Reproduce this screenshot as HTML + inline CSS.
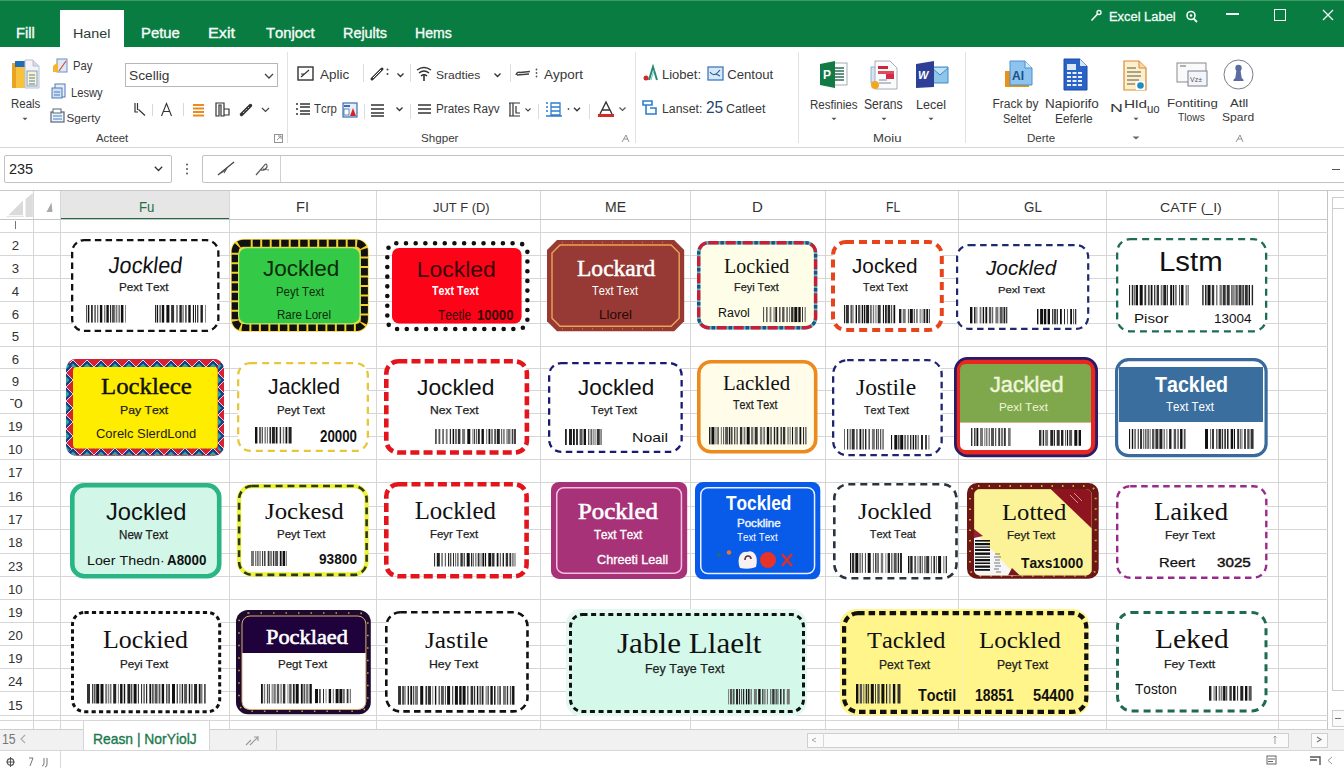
<!DOCTYPE html>
<html><head><meta charset="utf-8"><style>
html,body{margin:0;padding:0;}
body{width:1344px;height:768px;overflow:hidden;position:relative;background:#fff;font-family:"Liberation Sans",sans-serif;}
.a{position:absolute;box-sizing:border-box;}
svg.a{overflow:visible;}
.t{position:absolute;white-space:pre;transform-origin:0 0;font-kerning:none;font-feature-settings:"kern" 0,"liga" 0;}
</style></head><body>
<div class="a" style="left:0.00px;top:0.00px;width:1344.00px;height:47.00px;background:#097c42"></div>
<div class="a" style="left:0.00px;top:0.00px;width:1344.00px;height:1.00px;background:#3d9a62"></div>
<div class="a" style="left:60.00px;top:10.00px;width:63.50px;height:37.00px;background:#fff"></div>
<div class="t" style="left:15.79px;top:27.00px;font-family:'Liberation Sans', sans-serif;font-size:13.80px;line-height:13.80px;font-weight:400;font-style:normal;color:#f4fbf6;transform:scaleX(1.0660);-webkit-text-stroke:0.35px #f4fbf6;">Fill</div>
<div class="t" style="left:140.78px;top:26.00px;font-family:'Liberation Sans', sans-serif;font-size:14.54px;line-height:14.54px;font-weight:400;font-style:normal;color:#f4fbf6;transform:scaleX(1.0236);-webkit-text-stroke:0.35px #f4fbf6;">Petue</div>
<div class="t" style="left:208.47px;top:27.00px;font-family:'Liberation Sans', sans-serif;font-size:13.80px;line-height:13.80px;font-weight:400;font-style:normal;color:#f4fbf6;transform:scaleX(1.1758);-webkit-text-stroke:0.35px #f4fbf6;">Exit</div>
<div class="t" style="left:266.47px;top:27.00px;font-family:'Liberation Sans', sans-serif;font-size:13.80px;line-height:13.80px;font-weight:400;font-style:normal;color:#f4fbf6;transform:scaleX(1.0748);-webkit-text-stroke:0.35px #f4fbf6;">Tonjoct</div>
<div class="t" style="left:343.32px;top:27.00px;font-family:'Liberation Sans', sans-serif;font-size:13.80px;line-height:13.80px;font-weight:400;font-style:normal;color:#f4fbf6;transform:scaleX(1.0431);-webkit-text-stroke:0.35px #f4fbf6;">Rejults</div>
<div class="t" style="left:414.75px;top:26.00px;font-family:'Liberation Sans', sans-serif;font-size:14.54px;line-height:14.54px;font-weight:400;font-style:normal;color:#f4fbf6;transform:scaleX(0.9686);-webkit-text-stroke:0.35px #f4fbf6;">Hems</div>
<div class="t" style="left:73.43px;top:27.00px;font-family:'Liberation Sans', sans-serif;font-size:13.52px;line-height:13.52px;font-weight:400;font-style:normal;color:#2b3b33;transform:scaleX(1.0563);">Hanel</div>
<div class="t" style="left:1109.44px;top:10.00px;font-family:'Liberation Sans', sans-serif;font-size:13.52px;line-height:13.52px;font-weight:400;font-style:normal;color:#f4fbf6;transform:scaleX(0.9543);-webkit-text-stroke:0.3px #f4fbf6;">Excel Label</div>
<svg class="a" style="left:1090.00px;top:9.00px;" width="12.00" height="13.00" viewBox="0 0 12.00 13.00"><path d="M1.5 11.5 L8 4.5" stroke="#f4fbf6" stroke-width="1.6" fill="none"/><circle cx="9" cy="3.5" r="2" stroke="#f4fbf6" stroke-width="1.4" fill="none"/></svg>
<svg class="a" style="left:1185.00px;top:10.00px;" width="14.00" height="13.00" viewBox="0 0 14.00 13.00"><circle cx="6" cy="5.5" r="4" stroke="#f4fbf6" stroke-width="1.6" fill="none"/><path d="M8.5 8.5 L12 12" stroke="#f4fbf6" stroke-width="1.8"/><circle cx="6" cy="5.5" r="1.3" fill="#f4fbf6"/></svg>
<div class="a" style="left:1226.40px;top:13.30px;width:12.60px;height:1.50px;background:#f4fbf6"></div>
<div class="a" style="left:1274.00px;top:8.80px;width:12.30px;height:11.80px;border:1.5px solid #f4fbf6"></div>
<svg class="a" style="left:1322.00px;top:9.00px;" width="12.00" height="12.00" viewBox="0 0 12.00 12.00"><path d="M1 1 L11 11 M11 1 L1 11" stroke="#f4fbf6" stroke-width="1.4"/></svg>
<div class="a" style="left:0.00px;top:147.00px;width:1344.00px;height:1.00px;background:#d6d6d6"></div>
<div class="a" style="left:287.40px;top:52.00px;width:1.00px;height:91.00px;background:#e2e2e2"></div>
<div class="a" style="left:634.50px;top:52.00px;width:1.00px;height:91.00px;background:#e2e2e2"></div>
<div class="a" style="left:798.10px;top:52.00px;width:1.00px;height:91.00px;background:#e2e2e2"></div>
<div class="a" style="left:964.50px;top:52.00px;width:1.00px;height:91.00px;background:#e2e2e2"></div>
<svg class="a" style="left:11.00px;top:58.00px;" width="31.00" height="32.00" viewBox="0 0 31.00 32.00"><rect x="1" y="5" width="16" height="25" fill="#f7c33c" rx="1"/><rect x="1" y="5" width="4" height="25" fill="#e8a321"/>
<path d="M4 3 h11 v6 h-11z" fill="#1f6fb8"/><path d="M14 2 L22 2 L28 8 L28 30 L14 30 Z" fill="#f3f3f8" stroke="#b9bfd0" stroke-width="1"/>
<path d="M22 2 L22 8 L28 8" fill="#d8dbe6" stroke="#b9bfd0" stroke-width="1"/><rect x="16" y="13" width="10" height="15" fill="#fff3c4" stroke="#7aa0d0" stroke-width="1"/>
<path d="M18 17h6M18 20h6M18 23h6M18 26h6" stroke="#4d7fc3" stroke-width="1.2"/></svg>
<div class="t" style="left:10.66px;top:98.00px;font-family:'Liberation Sans', sans-serif;font-size:12.28px;line-height:12.28px;font-weight:400;font-style:normal;color:#383838;transform:scaleX(0.9349);">Reals</div>
<svg class="a" style="left:22.00px;top:117.00px;" width="6.00" height="4.00" viewBox="0 0 6.00 4.00"><path d="M0.5 0.8 L3 3.3 L5.5 0.8z" fill="#555"/></svg>
<svg class="a" style="left:52.00px;top:58.00px;" width="16.00" height="16.00" viewBox="0 0 16.00 16.00"><rect x="5" y="1" width="10" height="13" fill="#dfe9f6" stroke="#6b8fc5"/><path d="M1 8 l5 -4 v10 h-5z" fill="#f3b52a"/><path d="M7 13 L14 3" stroke="#d14a3a" stroke-width="1.2"/></svg>
<div class="t" style="left:72.87px;top:61.00px;font-family:'Liberation Sans', sans-serif;font-size:11.92px;line-height:11.92px;font-weight:400;font-style:normal;color:#383838;transform:scaleX(0.9469);">Pay</div>
<svg class="a" style="left:51.00px;top:83.00px;" width="16.00" height="17.00" viewBox="0 0 16.00 17.00"><rect x="4" y="1" width="10" height="13" fill="#e6eefa" stroke="#5179b6"/><rect x="1" y="5" width="10" height="10" fill="#cfe0f5" stroke="#5179b6"/><path d="M3 9h6M3 12h6" stroke="#5179b6"/></svg>
<div class="t" style="left:70.88px;top:86.00px;font-family:'Liberation Sans', sans-serif;font-size:13.08px;line-height:13.08px;font-weight:400;font-style:normal;color:#383838;transform:scaleX(0.8532);">Leswy</div>
<svg class="a" style="left:50.00px;top:108.00px;" width="15.00" height="15.00" viewBox="0 0 15.00 15.00"><rect x="1" y="4" width="13" height="10" fill="#eef3f9" stroke="#55657a" stroke-width="1.2"/><rect x="3" y="1" width="8" height="4" fill="#fff" stroke="#55657a"/><path d="M3 8h9M3 11h9" stroke="#3f7ec9" stroke-width="1.2"/></svg>
<div class="t" style="left:66.46px;top:112.00px;font-family:'Liberation Sans', sans-serif;font-size:11.74px;line-height:11.74px;font-weight:400;font-style:normal;color:#383838;">Sgerty</div>
<div class="t" style="left:96.38px;top:132.00px;font-family:'Liberation Sans', sans-serif;font-size:11.77px;line-height:11.77px;font-weight:400;font-style:normal;color:#3a3a3a;transform:scaleX(0.9649);">Acteet</div>
<svg class="a" style="left:274.00px;top:134.00px;" width="9.00" height="9.00" viewBox="0 0 9.00 9.00"><rect x="0.5" y="0.5" width="8" height="8" fill="none" stroke="#888" stroke-width="0.9"/><path d="M3 6 L7 2 M4 2h3v3" stroke="#888" stroke-width="0.9" fill="none"/></svg>
<div class="a" style="left:125.40px;top:63.40px;width:152.40px;height:24.10px;border:1px solid #b7b7b7;background:#fff"></div>
<div class="t" style="left:129.38px;top:69.00px;font-family:'Liberation Sans', sans-serif;font-size:13.11px;line-height:13.11px;font-weight:400;font-style:normal;color:#383838;transform:scaleX(1.0462);">Scellig</div>
<svg class="a" style="left:264.00px;top:73.00px;" width="10.00" height="7.00" viewBox="0 0 10.00 7.00"><path d="M1 1 L5 5 L9 1" stroke="#444" stroke-width="1.3" fill="none"/></svg>
<svg class="a" style="left:133.00px;top:102.00px;" width="14.00" height="15.00" viewBox="0 0 14.00 15.00"><path d="M2 1 v9 h3 M4.5 1 v7 M5.5 7.5 L12 13.5" stroke="#333" stroke-width="1.2" fill="none"/></svg>
<div class="a" style="left:152.00px;top:104.00px;width:1.00px;height:12.00px;background:#d8d8d8"></div>
<svg class="a" style="left:160.00px;top:102.00px;" width="14.00" height="15.00" viewBox="0 0 14.00 15.00"><path d="M1.5 14 L6.5 1.5 L11.5 14 M3.5 9.5 h6" stroke="#333" stroke-width="1.1" fill="none"/></svg>
<div class="a" style="left:183.00px;top:103.00px;width:1.00px;height:13.00px;background:#d8d8d8"></div>
<svg class="a" style="left:193.00px;top:103.00px;" width="11.00" height="14.00" viewBox="0 0 11.00 14.00"><path d="M0 2h11M0 5.5h11M0 9h11M0 12.5h11" stroke="#e98a1f" stroke-width="2"/></svg>
<svg class="a" style="left:215.00px;top:102.00px;" width="15.00" height="15.00" viewBox="0 0 15.00 15.00"><path d="M1 1 h8 v13 h-3 v-11 h-2 v11 h-3z M9 7 h5 v6 h-5" stroke="#333" stroke-width="1.2" fill="none"/></svg>
<svg class="a" style="left:239.00px;top:102.00px;" width="14.00" height="15.00" viewBox="0 0 14.00 15.00"><path d="M2.5 12.5 L11.5 3.5" stroke="#333" stroke-width="3.4" stroke-linecap="round"/><path d="M4 11 L10 5" stroke="#fff" stroke-width="0.7" stroke-dasharray="2 1.5"/></svg>
<svg class="a" style="left:261.00px;top:107.00px;" width="9.00" height="6.00" viewBox="0 0 9.00 6.00"><path d="M1 1 L4.5 4.5 L8 1" stroke="#444" stroke-width="1.2" fill="none"/></svg>
<svg class="a" style="left:297.00px;top:66.00px;" width="17.00" height="15.00" viewBox="0 0 17.00 15.00"><rect x="1" y="1" width="15" height="13" fill="none" stroke="#333" stroke-width="1.4"/><path d="M4 11 L12 4 M4 8h4" stroke="#333" stroke-width="1.2"/></svg>
<div class="t" style="left:320.47px;top:69.00px;font-family:'Liberation Sans', sans-serif;font-size:12.70px;line-height:12.70px;font-weight:400;font-style:normal;color:#383838;transform:scaleX(1.0604);">Aplic</div>
<div class="a" style="left:363.30px;top:64.00px;width:1.00px;height:18.00px;background:#dcdcdc"></div>
<svg class="a" style="left:370.00px;top:66.00px;" width="15.00" height="15.00" viewBox="0 0 15.00 15.00"><path d="M2 13 L12 3" stroke="#333" stroke-width="3" stroke-linecap="round"/><path d="M3 12 L11 4" stroke="#fff" stroke-width="1"/></svg>
<svg class="a" style="left:386.00px;top:68.00px;" width="3.00" height="8.00" viewBox="0 0 3.00 8.00"><circle cx="1.5" cy="1.5" r="1" fill="#444"/><circle cx="1.5" cy="6" r="1" fill="#444"/></svg>
<svg class="a" style="left:397.00px;top:73.00px;" width="7.00" height="5.00" viewBox="0 0 7.00 5.00"><path d="M0.5 0.5 L3.5 3.5 L6.5 0.5" stroke="#333" stroke-width="1.3" fill="none"/></svg>
<div class="a" style="left:409.50px;top:64.00px;width:1.00px;height:18.00px;background:#dcdcdc"></div>
<svg class="a" style="left:416.00px;top:66.00px;" width="16.00" height="15.00" viewBox="0 0 16.00 15.00"><path d="M1 4 Q8 -1 15 4 M3 7 Q8 3 13 7 M5 10 Q8 7.5 11 10" stroke="#333" stroke-width="1.5" fill="none"/><path d="M8 9 v6" stroke="#333" stroke-width="1.6"/></svg>
<div class="t" style="left:435.75px;top:69.00px;font-family:'Liberation Sans', sans-serif;font-size:11.73px;line-height:11.73px;font-weight:400;font-style:normal;color:#383838;transform:scaleX(1.0315);">Sradties</div>
<svg class="a" style="left:494.00px;top:73.00px;" width="7.00" height="5.00" viewBox="0 0 7.00 5.00"><path d="M0.5 0.5 L3.5 3.5 L6.5 0.5" stroke="#333" stroke-width="1.3" fill="none"/></svg>
<div class="a" style="left:510.00px;top:64.00px;width:1.00px;height:18.00px;background:#dcdcdc"></div>
<svg class="a" style="left:515.00px;top:70.00px;" width="16.00" height="7.00" viewBox="0 0 16.00 7.00"><path d="M1 5 Q2 1.5 5 2.5 L15 1.5 M2 5 L14 4" stroke="#444" stroke-width="1.4" fill="none"/></svg>
<svg class="a" style="left:535.00px;top:68.00px;" width="3.00" height="10.00" viewBox="0 0 3.00 10.00"><circle cx="1.5" cy="1.5" r="0.9" fill="#555"/><circle cx="1.5" cy="5" r="0.9" fill="#555"/><circle cx="1.5" cy="8.5" r="0.9" fill="#555"/></svg>
<div class="t" style="left:543.97px;top:69.00px;font-family:'Liberation Sans', sans-serif;font-size:12.35px;line-height:12.35px;font-weight:400;font-style:normal;color:#383838;transform:scaleX(1.0957);">Ayport</div>
<svg class="a" style="left:295.00px;top:102.00px;" width="16.00" height="15.00" viewBox="0 0 16.00 15.00"><path d="M1 2h2M1 7h2M1 12h2M5 2h10M5 5h10M5 9h10M5 12h10" stroke="#333" stroke-width="1.4"/></svg>
<div class="t" style="left:314.24px;top:102.00px;font-family:'Liberation Sans', sans-serif;font-size:13.66px;line-height:13.66px;font-weight:400;font-style:normal;color:#383838;transform:scaleX(0.8357);">Tcrp</div>
<svg class="a" style="left:342.00px;top:102.00px;" width="16.00" height="16.00" viewBox="0 0 16.00 16.00"><rect x="1" y="1" width="14" height="14" fill="#e8eef7" stroke="#3a6fb0" stroke-width="1.2"/><rect x="2" y="3" width="6" height="2" fill="#3a6fb0"/><path d="M8 14 L11 6 L14 14z" fill="#d6202a"/><rect x="2" y="7" width="5" height="6" fill="#fff" stroke="#3a6fb0" stroke-width="0.8"/></svg>
<div class="a" style="left:364.00px;top:104.00px;width:1.00px;height:15.00px;background:#dcdcdc"></div>
<svg class="a" style="left:371.00px;top:103.00px;" width="14.00" height="14.00" viewBox="0 0 14.00 14.00"><path d="M0 2h13M0 6h13M0 10h13M0 13h13" stroke="#333" stroke-width="1.5"/></svg>
<svg class="a" style="left:396.00px;top:107.00px;" width="7.00" height="5.00" viewBox="0 0 7.00 5.00"><path d="M0.5 0.5 L3.5 3.5 L6.5 0.5" stroke="#333" stroke-width="1.3" fill="none"/></svg>
<div class="a" style="left:409.50px;top:104.00px;width:1.00px;height:15.00px;background:#dcdcdc"></div>
<svg class="a" style="left:418.00px;top:103.00px;" width="14.00" height="14.00" viewBox="0 0 14.00 14.00"><path d="M0 2h13M0 6h13M0 10h13" stroke="#333" stroke-width="1.6"/></svg>
<div class="t" style="left:435.84px;top:102.00px;font-family:'Liberation Sans', sans-serif;font-size:13.66px;line-height:13.66px;font-weight:400;font-style:normal;color:#383838;transform:scaleX(0.8560);">Prates Rayv</div>
<svg class="a" style="left:508.00px;top:102.00px;" width="13.00" height="15.00" viewBox="0 0 13.00 15.00"><path d="M1 1h11M1 14h11M2 1v13M5 1v13M8 4v7h4" stroke="#333" stroke-width="1.2" fill="none"/></svg>
<svg class="a" style="left:525.00px;top:108.00px;" width="6.00" height="4.00" viewBox="0 0 6.00 4.00"><path d="M0.5 0.5 L3 3 L5.5 0.5" stroke="#444" stroke-width="1.1" fill="none"/></svg>
<div class="a" style="left:537.70px;top:104.00px;width:1.00px;height:15.00px;background:#dcdcdc"></div>
<svg class="a" style="left:545.00px;top:101.00px;" width="17.00" height="16.00" viewBox="0 0 17.00 16.00"><path d="M1 2h2M1 6h2M1 10h2M6 2h9v12h-9z M6 6h9M6 10h9M1 15h16" stroke="#2f7dd0" stroke-width="1.3" fill="none"/></svg>
<svg class="a" style="left:567.00px;top:107.00px;" width="15.00" height="5.00" viewBox="0 0 15.00 5.00"><circle cx="1.5" cy="2" r="0.9" fill="#555"/><path d="M7 0.8 L10 3.8 L13 0.8" stroke="#333" stroke-width="1.3" fill="none"/></svg>
<div class="a" style="left:588.60px;top:104.00px;width:1.00px;height:15.00px;background:#dcdcdc"></div>
<svg class="a" style="left:597.00px;top:101.00px;" width="18.00" height="17.00" viewBox="0 0 18.00 17.00"><path d="M3 13 L9 1 L15 13 M5.5 9h7" stroke="#333" stroke-width="1.4" fill="none"/><rect x="1" y="13" width="16" height="3" fill="#d42a2a"/></svg>
<svg class="a" style="left:619.00px;top:107.00px;" width="7.00" height="5.00" viewBox="0 0 7.00 5.00"><path d="M0.5 0.5 L3.5 3.5 L6.5 0.5" stroke="#555" stroke-width="1.2" fill="none"/></svg>
<div class="t" style="left:421.07px;top:133.00px;font-family:'Liberation Sans', sans-serif;font-size:10.76px;line-height:10.76px;font-weight:400;font-style:normal;color:#3a3a3a;transform:scaleX(1.0810);">Shgper</div>
<svg class="a" style="left:621.00px;top:134.00px;" width="9.00" height="9.00" viewBox="0 0 9.00 9.00"><path d="M1 8 L5 1 L8 8 M3 5h4" stroke="#888" stroke-width="0.9" fill="none"/></svg>
<svg class="a" style="left:643.00px;top:66.00px;" width="16.00" height="16.00" viewBox="0 0 16.00 16.00"><path d="M6 14 L10 1 L14 14" stroke="#2a8a70" stroke-width="2" fill="none"/><path d="M8 14 L11 4" stroke="#6cc" stroke-width="1"/><circle cx="3" cy="12" r="2.5" fill="#d42a2a"/></svg>
<div class="t" style="left:662.43px;top:69.00px;font-family:'Liberation Sans', sans-serif;font-size:12.70px;line-height:12.70px;font-weight:400;font-style:normal;color:#383838;transform:scaleX(1.0245);">Liobet:</div>
<svg class="a" style="left:707.00px;top:66.00px;" width="17.00" height="15.00" viewBox="0 0 17.00 15.00"><rect x="1" y="1" width="15" height="13" fill="#d7e8f7" stroke="#3e7cc0" stroke-width="1.3"/><path d="M3 6 Q7 12 13 4 M9 8 L13 10" stroke="#2a5f9e" stroke-width="1.2" fill="none"/></svg>
<div class="t" style="left:727.13px;top:68.00px;font-family:'Liberation Sans', sans-serif;font-size:13.18px;line-height:13.18px;font-weight:400;font-style:normal;color:#383838;">Centout</div>
<svg class="a" style="left:642.00px;top:100.00px;" width="16.00" height="16.00" viewBox="0 0 16.00 16.00"><path d="M1 1h9v4h-9z M4 5v9h10v-6h-6" stroke="#2f7dd0" stroke-width="1.6" fill="none"/></svg>
<div class="t" style="left:661.79px;top:102.00px;font-family:'Liberation Sans', sans-serif;font-size:13.08px;line-height:13.08px;font-weight:400;font-style:normal;color:#383838;transform:scaleX(0.9399);">Lanset:</div>
<div class="t" style="left:705.82px;top:100.00px;font-family:'Liberation Sans', sans-serif;font-size:15.75px;line-height:15.75px;font-weight:400;font-style:normal;color:#24466e;transform:scaleX(0.9832);">25</div>
<div class="t" style="left:726.07px;top:103.00px;font-family:'Liberation Sans', sans-serif;font-size:12.42px;line-height:12.42px;font-weight:400;font-style:normal;color:#383838;">Catleet</div>
<svg class="a" style="left:819.00px;top:60.00px;" width="29.00" height="29.00" viewBox="0 0 29.00 29.00"><rect x="12" y="3" width="16" height="22" fill="#fff" stroke="#8a9aa0" stroke-width="0.8"/>
<path d="M15 8h10M15 11h10M15 14h10M15 17h10M15 20h10" stroke="#2f6f5a" stroke-width="1.4"/>
<path d="M1 4 L16 1 L16 28 L1 25z" fill="#127a45"/><text x="4" y="19" font-family="Liberation Sans" font-weight="700" font-size="12" fill="#fff">P</text></svg>
<div class="t" style="left:809.75px;top:98.00px;font-family:'Liberation Sans', sans-serif;font-size:13.25px;line-height:13.25px;font-weight:400;font-style:normal;color:#383838;transform:scaleX(0.8730);">Resfinies</div>
<svg class="a" style="left:831.00px;top:117.00px;" width="6.00" height="4.00" viewBox="0 0 6.00 4.00"><path d="M0.5 0.8 L3 3.3 L5.5 0.8z" fill="#555"/></svg>
<svg class="a" style="left:869.00px;top:60.00px;" width="30.00" height="30.00" viewBox="0 0 30.00 30.00"><rect x="2" y="7" width="9" height="16" fill="#d5e6f3" stroke="#7aa0c8" stroke-width="0.8"/>
<path d="M6 1 h15 l7 7 v21 h-22z" fill="#fbfbfb" stroke="#9aa3b3" stroke-width="0.9"/>
<rect x="9" y="6" width="10" height="3" fill="#c8283a"/><rect x="9" y="11" width="16" height="3" fill="#e24a5e"/><rect x="17" y="14" width="8" height="5" fill="#d42a48"/>
<path d="M10 20h8M10 23h12" stroke="#7d8aa0" stroke-width="1"/><circle cx="6" cy="25" r="4" fill="#f2a81e"/></svg>
<div class="t" style="left:864.45px;top:98.00px;font-family:'Liberation Sans', sans-serif;font-size:13.75px;line-height:13.75px;font-weight:400;font-style:normal;color:#383838;transform:scaleX(0.8836);">Serans</div>
<svg class="a" style="left:881.00px;top:117.00px;" width="6.00" height="4.00" viewBox="0 0 6.00 4.00"><path d="M0.5 0.8 L3 3.3 L5.5 0.8z" fill="#555"/></svg>
<svg class="a" style="left:915.00px;top:60.00px;" width="34.00" height="29.00" viewBox="0 0 34.00 29.00"><path d="M17 7 h16 v16 h-16z" fill="#8ec6ea" stroke="#3d8ac8" stroke-width="1"/><path d="M17 8 L25 15 L33 8" stroke="#3d8ac8" stroke-width="1" fill="#bfe0f5"/>
<path d="M1 4 L19 1 L19 27 L1 28z" fill="#2e3f96"/><text x="3" y="19" font-family="Liberation Sans" font-style="italic" font-weight="700" font-size="11" fill="#fff">W</text></svg>
<div class="t" style="left:916.17px;top:98.00px;font-family:'Liberation Sans', sans-serif;font-size:13.25px;line-height:13.25px;font-weight:400;font-style:normal;color:#383838;transform:scaleX(0.9462);">Lecel</div>
<svg class="a" style="left:928.00px;top:117.00px;" width="6.00" height="4.00" viewBox="0 0 6.00 4.00"><path d="M0.5 0.8 L3 3.3 L5.5 0.8z" fill="#555"/></svg>
<div class="t" style="left:872.62px;top:133.00px;font-family:'Liberation Sans', sans-serif;font-size:11.04px;line-height:11.04px;font-weight:400;font-style:normal;color:#3a3a3a;transform:scaleX(1.1888);">Moiu</div>
<svg class="a" style="left:1004.00px;top:60.00px;" width="30.00" height="28.00" viewBox="0 0 30.00 28.00"><path d="M1 11 h5 v12 h19 v4 h-24z" fill="#e8921e"/>
<path d="M6 1 h15 l7 7 v17 h-22z" fill="#8cc4ee" stroke="#4d8fcf" stroke-width="1"/><path d="M21 1 v7 h7" fill="#d6ebfa" stroke="#4d8fcf" stroke-width="1"/>
<text x="8" y="20" font-family="Liberation Sans" font-weight="700" font-size="12" fill="#1b4f8a">AI</text></svg>
<div class="t" style="left:992.42px;top:98.00px;font-family:'Liberation Sans', sans-serif;font-size:12.01px;line-height:12.01px;font-weight:400;font-style:normal;color:#383838;">Frack by</div>
<div class="t" style="left:1003.00px;top:113.00px;font-family:'Liberation Sans', sans-serif;font-size:12.01px;line-height:12.01px;font-weight:400;font-style:normal;color:#383838;transform:scaleX(0.9146);">Seltet</div>
<svg class="a" style="left:1063.00px;top:58.00px;" width="25.00" height="33.00" viewBox="0 0 25.00 33.00"><path d="M1 1 h16 l7 7 v24 h-23z" fill="#2a63c8" stroke="#1a4aa0" stroke-width="1"/><path d="M17 1 v7 h7z" fill="#d5e4f7"/>
<rect x="4" y="6" width="9" height="6" fill="#dbe8f8"/><path d="M4 15h16M4 19h16M4 23h16M4 27h16" stroke="#e8f0fb" stroke-width="1.8" stroke-dasharray="4 1.5"/></svg>
<div class="t" style="left:1044.60px;top:98.00px;font-family:'Liberation Sans', sans-serif;font-size:12.01px;line-height:12.01px;font-weight:400;font-style:normal;color:#383838;transform:scaleX(1.1211);">Napiorifo</div>
<div class="t" style="left:1054.72px;top:113.00px;font-family:'Liberation Sans', sans-serif;font-size:12.01px;line-height:12.01px;font-weight:400;font-style:normal;color:#383838;transform:scaleX(0.9911);">Eeferle</div>
<svg class="a" style="left:1123.00px;top:60.00px;" width="24.00" height="31.00" viewBox="0 0 24.00 31.00"><path d="M1 1 h15 l7 7 v22 h-22z" fill="#fcefc9" stroke="#d88a3a" stroke-width="1.2"/><path d="M16 1 v7 h7" fill="#f6d9a8" stroke="#d88a3a" stroke-width="1"/>
<path d="M4 8h9M4 12h14M4 16h14M4 20h12M4 24h8" stroke="#8c8c78" stroke-width="1.3"/><rect x="13" y="21" width="9" height="9" fill="#fff"/><circle cx="17.5" cy="25.5" r="3.3" fill="#1d8fc0"/></svg>
<div class="t" style="left:1109.93px;top:102.00px;font-family:'Liberation Sans', sans-serif;font-size:11.77px;line-height:11.77px;font-weight:400;font-style:normal;color:#383838;transform:scaleX(1.5205);">N</div>
<div class="t" style="left:1124.14px;top:99.00px;font-family:'Liberation Sans', sans-serif;font-size:11.04px;line-height:11.04px;font-weight:400;font-style:normal;color:#383838;transform:scaleX(1.3914);">Hld</div>
<div class="t" style="left:1146.76px;top:104.00px;font-family:'Liberation Sans', sans-serif;font-size:11.89px;line-height:11.89px;font-weight:400;font-style:normal;color:#383838;transform:scaleX(0.9617);">uo</div>
<svg class="a" style="left:1133.00px;top:117.00px;" width="6.00" height="4.00" viewBox="0 0 6.00 4.00"><path d="M0.5 0.8 L3 3.3 L5.5 0.8z" fill="#555"/></svg>
<div class="t" style="left:1026.65px;top:132.00px;font-family:'Liberation Sans', sans-serif;font-size:11.63px;line-height:11.63px;font-weight:400;font-style:normal;color:#3a3a3a;transform:scaleX(0.9939);">Derte</div>
<svg class="a" style="left:1132.00px;top:136.00px;" width="8.00" height="4.00" viewBox="0 0 8.00 4.00"><path d="M0.5 0.5 L4 3.5 L7.5 0.5z" fill="#666"/></svg>
<svg class="a" style="left:1176.00px;top:62.00px;" width="32.00" height="25.00" viewBox="0 0 32.00 25.00"><rect x="1" y="1" width="29" height="19" fill="#fafafa" stroke="#8a8a8a" stroke-width="1"/><path d="M4 4h6" stroke="#666"/>
<rect x="12" y="9" width="19" height="15" fill="#f3f5fa" stroke="#7a7f8a" stroke-width="1"/><text x="14" y="20" font-family="Liberation Sans" font-size="7" fill="#556">Vz±</text></svg>
<div class="t" style="left:1167.21px;top:98.00px;font-family:'Liberation Sans', sans-serif;font-size:11.04px;line-height:11.04px;font-weight:400;font-style:normal;color:#383838;transform:scaleX(1.2007);">Fontiting</div>
<div class="t" style="left:1178.07px;top:112.00px;font-family:'Liberation Sans', sans-serif;font-size:11.04px;line-height:11.04px;font-weight:400;font-style:normal;color:#383838;transform:scaleX(0.9296);">Tlows</div>
<svg class="a" style="left:1223.00px;top:59.00px;" width="31.00" height="31.00" viewBox="0 0 31.00 31.00"><circle cx="15.5" cy="15.5" r="14.5" fill="#fff" stroke="#7a7a8a" stroke-width="1"/><circle cx="15.5" cy="9" r="3.2" fill="#5b6aa0"/><path d="M13.5 11 h4 l1.2 8 q2 1 2 3 h-10.4 q0 -2 2 -3z" fill="#5b6aa0"/></svg>
<div class="t" style="left:1229.87px;top:98.00px;font-family:'Liberation Sans', sans-serif;font-size:11.04px;line-height:11.04px;font-weight:400;font-style:normal;color:#383838;transform:scaleX(1.1937);">Atll</div>
<div class="t" style="left:1221.95px;top:112.00px;font-family:'Liberation Sans', sans-serif;font-size:11.04px;line-height:11.04px;font-weight:400;font-style:normal;color:#383838;transform:scaleX(1.0903);">Spard</div>
<svg class="a" style="left:1235.00px;top:134.00px;" width="9.00" height="9.00" viewBox="0 0 9.00 9.00"><path d="M1 8 L5 1 L8 8 M3 5h4" stroke="#888" stroke-width="0.9" fill="none"/></svg>
<div class="a" style="left:4.00px;top:154.60px;width:167.50px;height:28.60px;border:1px solid #c2c2c2;border-radius:2px;background:#fff"></div>
<div class="t" style="left:9.07px;top:162.00px;font-family:'Liberation Sans', sans-serif;font-size:14.04px;line-height:14.04px;font-weight:400;font-style:normal;color:#222;transform:scaleX(1.0307);">235</div>
<svg class="a" style="left:154.00px;top:166.00px;" width="9.00" height="6.00" viewBox="0 0 9.00 6.00"><path d="M0.8 0.8 L4.5 4.5 L8.2 0.8" stroke="#333" stroke-width="1.3" fill="none"/></svg>
<svg class="a" style="left:185.00px;top:163.00px;" width="4.00" height="13.00" viewBox="0 0 4.00 13.00"><circle cx="2" cy="1.5" r="1" fill="#555"/><circle cx="2" cy="6" r="1" fill="#555"/><circle cx="2" cy="10.5" r="1" fill="#555"/></svg>
<div class="a" style="left:201.60px;top:154.60px;width:1200.00px;height:28.60px;border:1px solid #c2c2c2;border-radius:2px;background:#fff"></div>
<div class="a" style="left:280.30px;top:156.00px;width:1.00px;height:26.00px;background:#d0d0d0"></div>
<svg class="a" style="left:217.00px;top:161.00px;" width="18.00" height="15.00" viewBox="0 0 18.00 15.00"><path d="M1 14 L17 1" stroke="#444" stroke-width="1.3"/><path d="M4 12 L9 8 M7 12 L10 7" stroke="#555" stroke-width="1.2"/></svg>
<svg class="a" style="left:255.00px;top:161.00px;" width="15.00" height="15.00" viewBox="0 0 15.00 15.00"><path d="M1 14 L8 6 Q12 0 12 6 Q10 10 6 9 M8 8 L14 9" stroke="#555" stroke-width="1.2" fill="none"/></svg>
<div class="a" style="left:1332.00px;top:168.50px;width:8.00px;height:1.50px;background:#555"></div>
<div class="a" style="left:0.00px;top:190.20px;width:1344.00px;height:1.00px;background:#c8c8c8"></div>
<div class="a" style="left:60.90px;top:190.50px;width:168.10px;height:29.00px;background:#e6e6e6"></div>
<div class="a" style="left:60.90px;top:218.30px;width:168.10px;height:2.20px;background:#1f6b45"></div>
<div class="a" style="left:32.50px;top:190.50px;width:1.00px;height:538.00px;background:#d6d6d6"></div>
<div class="a" style="left:60.00px;top:190.50px;width:1.00px;height:538.00px;background:#d6d6d6"></div>
<div class="a" style="left:228.50px;top:190.50px;width:1.00px;height:538.00px;background:#d6d6d6"></div>
<div class="a" style="left:376.00px;top:190.50px;width:1.00px;height:538.00px;background:#d6d6d6"></div>
<div class="a" style="left:539.50px;top:190.50px;width:1.00px;height:538.00px;background:#d6d6d6"></div>
<div class="a" style="left:689.50px;top:190.50px;width:1.00px;height:538.00px;background:#d6d6d6"></div>
<div class="a" style="left:824.50px;top:190.50px;width:1.00px;height:538.00px;background:#d6d6d6"></div>
<div class="a" style="left:958.00px;top:190.50px;width:1.00px;height:538.00px;background:#d6d6d6"></div>
<div class="a" style="left:1105.50px;top:190.50px;width:1.00px;height:538.00px;background:#d6d6d6"></div>
<div class="a" style="left:1277.50px;top:190.50px;width:1.00px;height:538.00px;background:#d6d6d6"></div>
<div class="a" style="left:1327.20px;top:190.50px;width:1.20px;height:538.00px;background:#c4c4c4"></div>
<div class="a" style="left:0.00px;top:219.30px;width:1328.00px;height:1.20px;background:#c6c6c6"></div>
<div class="a" style="left:0.00px;top:232.10px;width:1328.00px;height:1.00px;background:#d6d6d6"></div>
<div class="a" style="left:0.00px;top:254.90px;width:1328.00px;height:1.00px;background:#d6d6d6"></div>
<div class="a" style="left:0.00px;top:278.00px;width:1328.00px;height:1.00px;background:#d6d6d6"></div>
<div class="a" style="left:0.00px;top:301.00px;width:1328.00px;height:1.00px;background:#d6d6d6"></div>
<div class="a" style="left:0.00px;top:322.90px;width:1328.00px;height:1.00px;background:#d6d6d6"></div>
<div class="a" style="left:0.00px;top:345.80px;width:1328.00px;height:1.00px;background:#d6d6d6"></div>
<div class="a" style="left:0.00px;top:368.10px;width:1328.00px;height:1.00px;background:#d6d6d6"></div>
<div class="a" style="left:0.00px;top:389.80px;width:1328.00px;height:1.00px;background:#d6d6d6"></div>
<div class="a" style="left:0.00px;top:413.20px;width:1328.00px;height:1.00px;background:#d6d6d6"></div>
<div class="a" style="left:0.00px;top:436.10px;width:1328.00px;height:1.00px;background:#d6d6d6"></div>
<div class="a" style="left:0.00px;top:459.00px;width:1328.00px;height:1.00px;background:#d6d6d6"></div>
<div class="a" style="left:0.00px;top:482.40px;width:1328.00px;height:1.00px;background:#d6d6d6"></div>
<div class="a" style="left:0.00px;top:505.50px;width:1328.00px;height:1.00px;background:#d6d6d6"></div>
<div class="a" style="left:0.00px;top:528.90px;width:1328.00px;height:1.00px;background:#d6d6d6"></div>
<div class="a" style="left:0.00px;top:552.60px;width:1328.00px;height:1.00px;background:#d6d6d6"></div>
<div class="a" style="left:0.00px;top:575.80px;width:1328.00px;height:1.00px;background:#d6d6d6"></div>
<div class="a" style="left:0.00px;top:598.80px;width:1328.00px;height:1.00px;background:#d6d6d6"></div>
<div class="a" style="left:0.00px;top:622.00px;width:1328.00px;height:1.00px;background:#d6d6d6"></div>
<div class="a" style="left:0.00px;top:644.90px;width:1328.00px;height:1.00px;background:#d6d6d6"></div>
<div class="a" style="left:0.00px;top:667.70px;width:1328.00px;height:1.00px;background:#d6d6d6"></div>
<div class="a" style="left:0.00px;top:691.10px;width:1328.00px;height:1.00px;background:#d6d6d6"></div>
<div class="a" style="left:0.00px;top:715.20px;width:1328.00px;height:1.00px;background:#d6d6d6"></div>
<div class="a" style="left:0.00px;top:719.90px;width:1328.00px;height:1.00px;background:#d6d6d6"></div>
<svg class="a" style="left:0.00px;top:188.00px;" width="40.00" height="32.00" viewBox="0 0 40.00 32.00"><path d="M8.3 27.2 L23 12.5 L23 27.2z" fill="#dadada"/><path d="M25.5 11 L32.8 5 L32.8 29 L25.5 29z" fill="#dcdcdc"/><path d="M6.5 28.6 H24" stroke="#e2e2e2" stroke-width="1"/></svg>
<svg class="a" style="left:45.00px;top:201.00px;" width="9.00" height="12.00" viewBox="0 0 9.00 12.00"><path d="M1.5 11 L6.5 1.5 L7.5 11z" fill="#aaa"/></svg>
<div class="t" style="left:138.51px;top:200.00px;font-family:'Liberation Sans', sans-serif;font-size:14.24px;line-height:14.24px;font-weight:400;font-style:normal;color:#1e6e44;transform:scaleX(0.9305);">Fu</div>
<div class="t" style="left:295.51px;top:200.00px;font-family:'Liberation Sans', sans-serif;font-size:14.24px;line-height:14.24px;font-weight:400;font-style:normal;color:#333;transform:scaleX(1.0221);">FI</div>
<div class="t" style="left:433.40px;top:201.00px;font-family:'Liberation Sans', sans-serif;font-size:13.52px;line-height:13.52px;font-weight:400;font-style:normal;color:#333;transform:scaleX(0.9555);">JUT F (D)</div>
<div class="t" style="left:604.85px;top:200.00px;font-family:'Liberation Sans', sans-serif;font-size:14.24px;line-height:14.24px;font-weight:400;font-style:normal;color:#333;transform:scaleX(0.9854);">ME</div>
<div class="t" style="left:752.07px;top:200.00px;font-family:'Liberation Sans', sans-serif;font-size:14.24px;line-height:14.24px;font-weight:400;font-style:normal;color:#333;transform:scaleX(1.0549);">D</div>
<div class="t" style="left:886.20px;top:200.00px;font-family:'Liberation Sans', sans-serif;font-size:14.24px;line-height:14.24px;font-weight:400;font-style:normal;color:#333;transform:scaleX(0.8544);">FL</div>
<div class="t" style="left:1023.63px;top:200.00px;font-family:'Liberation Sans', sans-serif;font-size:14.04px;line-height:14.04px;font-weight:400;font-style:normal;color:#333;transform:scaleX(0.9515);">GL</div>
<div class="t" style="left:1160.49px;top:201.00px;font-family:'Liberation Sans', sans-serif;font-size:13.52px;line-height:13.52px;font-weight:400;font-style:normal;color:#333;transform:scaleX(1.0410);">CATF (_I)</div>
<div class="t" style="left:11.83px;top:239.00px;font-family:'Liberation Sans', sans-serif;font-size:13.20px;line-height:13.20px;font-weight:400;font-style:normal;color:#333;">2</div>
<div class="t" style="left:11.87px;top:262.00px;font-family:'Liberation Sans', sans-serif;font-size:13.20px;line-height:13.20px;font-weight:400;font-style:normal;color:#333;">3</div>
<div class="t" style="left:11.87px;top:285.00px;font-family:'Liberation Sans', sans-serif;font-size:13.20px;line-height:13.20px;font-weight:400;font-style:normal;color:#333;">4</div>
<div class="t" style="left:11.78px;top:308.00px;font-family:'Liberation Sans', sans-serif;font-size:13.20px;line-height:13.20px;font-weight:400;font-style:normal;color:#333;">6</div>
<div class="t" style="left:11.84px;top:330.00px;font-family:'Liberation Sans', sans-serif;font-size:13.20px;line-height:13.20px;font-weight:400;font-style:normal;color:#333;">5</div>
<div class="t" style="left:11.78px;top:353.00px;font-family:'Liberation Sans', sans-serif;font-size:13.20px;line-height:13.20px;font-weight:400;font-style:normal;color:#333;">6</div>
<div class="t" style="left:11.83px;top:375.00px;font-family:'Liberation Sans', sans-serif;font-size:13.20px;line-height:13.20px;font-weight:400;font-style:normal;color:#333;">9</div>
<div class="t" style="left:13.59px;top:397.00px;font-family:'Liberation Sans', sans-serif;font-size:13.20px;line-height:13.20px;font-weight:400;font-style:normal;color:#333;transform:scaleX(1.1886);">0</div>
<div class="a" style="left:10.30px;top:398.80px;width:3.60px;height:1.30px;background:#444;transform:rotate(8deg)"></div>
<div class="t" style="left:7.97px;top:420.00px;font-family:'Liberation Sans', sans-serif;font-size:13.20px;line-height:13.20px;font-weight:400;font-style:normal;color:#333;">19</div>
<div class="t" style="left:7.91px;top:443.00px;font-family:'Liberation Sans', sans-serif;font-size:13.20px;line-height:13.20px;font-weight:400;font-style:normal;color:#333;">10</div>
<div class="t" style="left:7.99px;top:466.00px;font-family:'Liberation Sans', sans-serif;font-size:13.20px;line-height:13.20px;font-weight:400;font-style:normal;color:#333;">17</div>
<div class="t" style="left:7.95px;top:490.00px;font-family:'Liberation Sans', sans-serif;font-size:13.20px;line-height:13.20px;font-weight:400;font-style:normal;color:#333;">16</div>
<div class="t" style="left:7.99px;top:513.00px;font-family:'Liberation Sans', sans-serif;font-size:13.20px;line-height:13.20px;font-weight:400;font-style:normal;color:#333;">17</div>
<div class="t" style="left:7.94px;top:536.00px;font-family:'Liberation Sans', sans-serif;font-size:13.20px;line-height:13.20px;font-weight:400;font-style:normal;color:#333;">18</div>
<div class="t" style="left:8.12px;top:560.00px;font-family:'Liberation Sans', sans-serif;font-size:13.20px;line-height:13.20px;font-weight:400;font-style:normal;color:#333;">23</div>
<div class="t" style="left:7.91px;top:583.00px;font-family:'Liberation Sans', sans-serif;font-size:13.20px;line-height:13.20px;font-weight:400;font-style:normal;color:#333;">10</div>
<div class="t" style="left:7.97px;top:606.00px;font-family:'Liberation Sans', sans-serif;font-size:13.20px;line-height:13.20px;font-weight:400;font-style:normal;color:#333;">19</div>
<div class="t" style="left:8.08px;top:629.00px;font-family:'Liberation Sans', sans-serif;font-size:13.20px;line-height:13.20px;font-weight:400;font-style:normal;color:#333;">20</div>
<div class="t" style="left:7.97px;top:652.00px;font-family:'Liberation Sans', sans-serif;font-size:13.20px;line-height:13.20px;font-weight:400;font-style:normal;color:#333;">19</div>
<div class="t" style="left:8.02px;top:675.00px;font-family:'Liberation Sans', sans-serif;font-size:13.20px;line-height:13.20px;font-weight:400;font-style:normal;color:#333;">24</div>
<div class="t" style="left:7.93px;top:699.00px;font-family:'Liberation Sans', sans-serif;font-size:13.20px;line-height:13.20px;font-weight:400;font-style:normal;color:#333;">15</div>
<div class="a" style="left:15.00px;top:221.00px;width:1.00px;height:8.00px;background:#777"></div>
<div class="a" style="left:0.00px;top:728.50px;width:1344.00px;height:21.70px;background:#f1f1f1"></div>
<div class="a" style="left:0.00px;top:728.50px;width:1344.00px;height:1.00px;background:#cfcfcf"></div>
<div class="a" style="left:82.60px;top:721.20px;width:127.20px;height:29.00px;background:#fff;border-left:1px solid #d6d6d6;border-right:1px solid #d6d6d6"></div>
<div class="t" style="left:2.37px;top:733.00px;font-family:'Liberation Sans', sans-serif;font-size:13.81px;line-height:13.81px;font-weight:400;font-style:normal;color:#777;transform:scaleX(0.8887);">15</div>
<svg class="a" style="left:20.00px;top:734.00px;" width="6.00" height="10.00" viewBox="0 0 6.00 10.00"><path d="M5 1 L1 5 L5 9" stroke="#aaa" stroke-width="1.1" fill="none"/></svg>
<div class="t" style="left:92.61px;top:732.00px;font-family:'Liberation Sans', sans-serif;font-size:14.77px;line-height:14.77px;font-weight:400;font-style:normal;color:#1a7a4c;transform:scaleX(0.9384);-webkit-text-stroke:0.35px #1a7a4c;">Reasn | NorYiolJ</div>
<div class="a" style="left:209.80px;top:729.00px;width:67.00px;height:21.00px;border-right:1px solid #d3d3d3"></div>
<svg class="a" style="left:244.00px;top:733.00px;" width="17.00" height="14.00" viewBox="0 0 17.00 14.00"><path d="M2 12 L7 7 M6 12 L14 4 L14 8 M10 4 L14 4" stroke="#999" stroke-width="1.1" fill="none"/></svg>
<div class="a" style="left:806.50px;top:732.50px;width:482.00px;height:15.00px;border:1px solid #cfcfcf;background:#fafafa"></div>
<div class="a" style="left:806.50px;top:732.50px;width:17.00px;height:15.00px;border-right:1px solid #d8d8d8"></div>
<svg class="a" style="left:811.00px;top:737.00px;" width="6.00" height="6.00" viewBox="0 0 6.00 6.00"><path d="M5 1 L1 3 L5 5" stroke="#aaa" stroke-width="1" fill="none"/></svg>
<svg class="a" style="left:1273.00px;top:735.00px;" width="4.00" height="10.00" viewBox="0 0 4.00 10.00"><path d="M2 1 v8 M0.5 2.5 L2 1 L3.5 2.5" stroke="#999" stroke-width="0.9" fill="none"/></svg>
<div class="a" style="left:1311.00px;top:732.50px;width:16.70px;height:15.00px;border:1px solid #cfcfcf;background:#fafafa"></div>
<svg class="a" style="left:1316.00px;top:736.00px;" width="7.00" height="7.00" viewBox="0 0 7.00 7.00"><path d="M1 1 L5 3.5 L1 6" stroke="#777" stroke-width="1.1" fill="none"/></svg>
<div class="a" style="left:0.00px;top:750.00px;width:1344.00px;height:18.00px;background:#fff"></div>
<div class="a" style="left:0.00px;top:750.00px;width:1344.00px;height:1.00px;background:#d8d8d8"></div>
<div class="a" style="left:60.30px;top:750.00px;width:1.00px;height:18.00px;background:#d8d8d8"></div>
<svg class="a" style="left:6.00px;top:755.00px;" width="45.00" height="13.00" viewBox="0 0 45.00 13.00"><circle cx="4.5" cy="7" r="3.3" fill="none" stroke="#555" stroke-width="1.2"/><path d="M4.5 2v10M0.5 7h8" stroke="#555" stroke-width="1"/><path d="M23 3h4l-3 8" stroke="#777" stroke-width="1" fill="none"/><path d="M38 3v5q0 3 -2 3M41 3v6q0 3-2 3" stroke="#777" stroke-width="1" fill="none"/></svg>
<svg class="a" style="left:1266.00px;top:755.00px;" width="12.00" height="11.00" viewBox="0 0 12.00 11.00"><rect x="1" y="1" width="9" height="8" fill="none" stroke="#666" stroke-width="1"/><path d="M2 4h7M2 6.5h5" stroke="#666"/></svg>
<svg class="a" style="left:1309.00px;top:755.00px;" width="13.00" height="11.00" viewBox="0 0 13.00 11.00"><path d="M1 2h10v8M1 5h7" stroke="#555" stroke-width="1.4" fill="none"/></svg>
<svg class="a" style="left:1327.00px;top:756.00px;" width="7.00" height="9.00" viewBox="0 0 7.00 9.00"><path d="M5 1 L1 4.5 L5 8" stroke="#999" stroke-width="1" fill="none"/></svg>
<div class="a" style="left:1332.00px;top:197.00px;width:14.00px;height:494.00px;border:1px solid #cdcdcd;border-right:none;background:#fff"></div>
<div class="a" style="left:1332.00px;top:207.50px;width:12.00px;height:1.00px;background:#cdcdcd"></div>
<div class="a" style="left:1332.00px;top:710.00px;width:14.00px;height:17.00px;border:1px solid #cdcdcd;border-right:none;background:#fafafa"></div>
<div class="a" style="left:1335.00px;top:718.00px;width:6.00px;height:1.20px;background:#777"></div>
<svg class="a" style="left:71.20px;top:238.90px;" width="148.50" height="93.10" viewBox="0 0 148.50 93.10"><rect x="1.15" y="1.15" width="146.20" height="90.80" rx="12.00" fill="#fff" stroke="#111" stroke-width="2.30" stroke-dasharray="6.5 4.2" /></svg>
<div class="t" style="left:107.66px;top:254.00px;font-family:'Liberation Sans', sans-serif;font-size:22.77px;line-height:22.77px;font-weight:400;font-style:normal;color:#111;transform:scaleX(0.9525) skewX(-7.00deg);transform-origin:0 19.00px;">Jockled</div>
<div class="t" style="left:119.04px;top:281.00px;font-family:'Liberation Sans', sans-serif;font-size:11.63px;line-height:11.63px;font-weight:400;font-style:normal;color:#1e1e1e;transform:scaleX(1.0089);-webkit-text-stroke:0.25px #1e1e1e;">Pext Text</div>
<svg class="a" style="left:85.80px;top:304.80px;" width="39.80" height="17.60" viewBox="0 0 39.80 17.60"><rect x="0.00" y="0" width="1.10" height="17.60" fill="#555"/><rect x="1.90" y="0" width="1.40" height="17.60" fill="#111"/><rect x="5.00" y="0" width="1.80" height="17.60" fill="#333"/><rect x="8.50" y="0" width="1.10" height="17.60" fill="#111"/><rect x="11.30" y="0" width="0.90" height="17.60" fill="#333"/><rect x="13.90" y="0" width="2.40" height="17.60" fill="#111"/><rect x="18.00" y="0" width="1.40" height="17.60" fill="#777"/><rect x="20.40" y="0" width="2.40" height="17.60" fill="#111"/><rect x="24.10" y="0" width="0.90" height="17.60" fill="#111"/><rect x="25.80" y="0" width="3.00" height="17.60" fill="#555"/><rect x="29.60" y="0" width="1.80" height="17.60" fill="#777"/><rect x="32.40" y="0" width="1.80" height="17.60" fill="#777"/><rect x="35.00" y="0" width="2.40" height="17.60" fill="#111"/><rect x="39.10" y="0" width="0.70" height="17.60" fill="#555"/></svg>
<svg class="a" style="left:155.30px;top:304.80px;" width="50.80" height="17.60" viewBox="0 0 50.80 17.60"><rect x="0.00" y="0" width="0.90" height="17.60" fill="#111"/><rect x="1.70" y="0" width="1.40" height="17.60" fill="#111"/><rect x="4.40" y="0" width="1.40" height="17.60" fill="#555"/><rect x="6.80" y="0" width="2.40" height="17.60" fill="#111"/><rect x="11.40" y="0" width="3.00" height="17.60" fill="#111"/><rect x="16.10" y="0" width="3.00" height="17.60" fill="#333"/><rect x="21.30" y="0" width="1.40" height="17.60" fill="#555"/><rect x="24.40" y="0" width="2.40" height="17.60" fill="#222"/><rect x="27.60" y="0" width="0.90" height="17.60" fill="#222"/><rect x="30.20" y="0" width="1.40" height="17.60" fill="#333"/><rect x="33.30" y="0" width="2.40" height="17.60" fill="#111"/><rect x="37.90" y="0" width="1.10" height="17.60" fill="#111"/><rect x="40.00" y="0" width="0.90" height="17.60" fill="#111"/><rect x="42.20" y="0" width="1.10" height="17.60" fill="#111"/><rect x="45.50" y="0" width="2.40" height="17.60" fill="#222"/><rect x="50.10" y="0" width="0.70" height="17.60" fill="#555"/></svg>
<svg class="a" style="left:230.70px;top:239.30px;" width="137.60" height="92.70" viewBox="0 0 137.60 92.70"><rect x="0.00" y="0.00" width="137.60" height="92.70" rx="12.00" fill="#f2d22a" stroke="none" stroke-width="0.00" /><rect x="4.2" y="4.2" width="129.2" height="84.3" rx="8" fill="none" stroke="#111" stroke-width="7" stroke-dasharray="7.5 2"/></svg>
<svg class="a" style="left:238.30px;top:247.20px;" width="122.70" height="77.40" viewBox="0 0 122.70 77.40"><rect x="0.60" y="0.60" width="121.50" height="76.20" rx="8.00" fill="#34c946" stroke="#c9e860" stroke-width="1.20" /></svg>
<div class="t" style="left:262.65px;top:258.00px;font-family:'Liberation Sans', sans-serif;font-size:22.36px;line-height:22.36px;font-weight:400;font-style:normal;color:#0d2a0d;transform:scaleX(1.0066);">Jockled</div>
<div class="t" style="left:275.66px;top:286.00px;font-family:'Liberation Sans', sans-serif;font-size:12.06px;line-height:12.06px;font-weight:400;font-style:normal;color:#0d2a0d;transform:scaleX(0.9483);">Peyt Text</div>
<div class="t" style="left:277.05px;top:309.00px;font-family:'Liberation Sans', sans-serif;font-size:12.28px;line-height:12.28px;font-weight:400;font-style:normal;color:#0d2a0d;transform:scaleX(0.9421);">Rare Lorel</div>
<svg class="a" style="left:385.00px;top:240.70px;" width="144.70" height="90.30" viewBox="0 0 144.70 90.30"><rect x="2.3" y="2.3" width="140.1" height="85.7" rx="9" fill="none" stroke="#111" stroke-width="4.6" stroke-linecap="round" stroke-dasharray="0 9.692"/></svg>
<svg class="a" style="left:392.20px;top:248.30px;" width="129.60" height="75.50" viewBox="0 0 129.60 75.50"><rect x="0.00" y="0.00" width="129.60" height="75.50" rx="7.00" fill="#fd0318" stroke="none" stroke-width="0.00" /></svg>
<div class="t" style="left:416.81px;top:258.00px;font-family:'Liberation Sans', sans-serif;font-size:22.91px;line-height:22.91px;font-weight:400;font-style:normal;color:#3a0606;">Lockled</div>
<div class="t" style="left:432.18px;top:285.00px;font-family:'Liberation Sans', sans-serif;font-size:12.50px;line-height:12.50px;font-weight:700;font-style:normal;color:#fff;transform:scaleX(0.8537);">Text Text</div>
<div class="t" style="left:437.73px;top:309.00px;font-family:'Liberation Sans', sans-serif;font-size:13.80px;line-height:13.80px;font-weight:400;font-style:normal;color:#3a0606;transform:scaleX(0.8629);">Teetle</div>
<div class="t" style="left:476.57px;top:308.00px;font-family:'Liberation Sans', sans-serif;font-size:14.32px;line-height:14.32px;font-weight:700;font-style:normal;color:#3a0606;transform:scaleX(0.9156);">10000</div>
<svg class="a" style="left:547.20px;top:239.70px;" width="137.20" height="91.30" viewBox="0 0 137.20 91.30"><path d="M10.00 0 H127.20 L137.20 10.00 V81.30 L127.20 91.30 H10.00 L0 81.30 V10.00 Z" fill="#973a35"/><path transform="translate(5,5)" d="M8.00 0 H119.20 L127.20 8.00 V73.30 L119.20 81.30 H8.00 L0 73.30 V8.00 Z" fill="none" stroke="#eea552" stroke-width="1.4"/><path d="M15 2.5 H122.2 M15 88.8 H122.2" stroke="#c86a40" stroke-width="1.6" stroke-dasharray="1 9"/></svg>
<div class="t" style="left:576.52px;top:257.00px;font-family:'Liberation Serif', serif;font-size:23.35px;line-height:23.35px;font-weight:400;font-style:normal;color:#fff;transform:scaleX(1.0075);-webkit-text-stroke:0.5px #fff;">Lockard</div>
<div class="t" style="left:592.05px;top:284.00px;font-family:'Liberation Sans', sans-serif;font-size:13.08px;line-height:13.08px;font-weight:400;font-style:normal;color:#fff;transform:scaleX(0.8461);">Text Text</div>
<div class="t" style="left:598.89px;top:309.00px;font-family:'Liberation Sans', sans-serif;font-size:12.83px;line-height:12.83px;font-weight:400;font-style:normal;color:#2a0808;transform:scaleX(1.0516);">Llorel</div>
<svg class="a" style="left:697.20px;top:241.20px;" width="120.30" height="88.40" viewBox="0 0 120.30 88.40"><rect x="1.70" y="1.70" width="116.90" height="85.00" rx="10.00" fill="#fefee8" stroke="#4fc0b0" stroke-width="3.40" /><rect x="1.70" y="1.70" width="116.90" height="85.00" rx="10.00" fill="none" stroke="#c81e3c" stroke-width="3.40" stroke-dasharray="10 7" /><rect x="1.70" y="1.70" width="116.90" height="85.00" rx="10.00" fill="none" stroke="#2a4a90" stroke-width="3.40" stroke-dasharray="3.5 13.5"  stroke-dashoffset="-11.7"/></svg>
<div class="t" style="left:723.83px;top:256.00px;font-family:'Liberation Serif', serif;font-size:20.18px;line-height:20.18px;font-weight:400;font-style:normal;color:#111;transform:scaleX(0.9880);">Lockied</div>
<div class="t" style="left:733.81px;top:283.00px;font-family:'Liberation Sans', sans-serif;font-size:10.49px;line-height:10.49px;font-weight:400;font-style:normal;color:#1e1e1e;transform:scaleX(1.0382);-webkit-text-stroke:0.25px #1e1e1e;">Feyi Text</div>
<div class="t" style="left:717.68px;top:307.00px;font-family:'Liberation Sans', sans-serif;font-size:12.28px;line-height:12.28px;font-weight:400;font-style:normal;color:#111;transform:scaleX(1.0144);">Ravol</div>
<svg class="a" style="left:763.00px;top:306.60px;" width="42.80" height="15.10" viewBox="0 0 42.80 15.10"><rect x="0.00" y="0" width="1.10" height="15.10" fill="#555"/><rect x="3.30" y="0" width="1.10" height="15.10" fill="#222"/><rect x="6.60" y="0" width="1.80" height="15.10" fill="#777"/><rect x="10.60" y="0" width="0.90" height="15.10" fill="#555"/><rect x="12.30" y="0" width="1.80" height="15.10" fill="#222"/><rect x="16.30" y="0" width="1.10" height="15.10" fill="#111"/><rect x="19.10" y="0" width="2.40" height="15.10" fill="#555"/><rect x="23.20" y="0" width="1.80" height="15.10" fill="#777"/><rect x="26.00" y="0" width="1.10" height="15.10" fill="#777"/><rect x="28.10" y="0" width="2.40" height="15.10" fill="#333"/><rect x="31.30" y="0" width="3.00" height="15.10" fill="#111"/><rect x="35.30" y="0" width="2.40" height="15.10" fill="#111"/><rect x="39.00" y="0" width="0.90" height="15.10" fill="#222"/><rect x="41.60" y="0" width="1.20" height="15.10" fill="#777"/></svg>
<svg class="a" style="left:830.70px;top:240.00px;" width="112.80" height="92.00" viewBox="0 0 112.80 92.00"><rect x="2.00" y="2.00" width="108.80" height="88.00" rx="13.00" fill="#fff" stroke="#e8441c" stroke-width="4.00" stroke-dasharray="8 5" /></svg>
<div class="t" style="left:852.38px;top:256.00px;font-family:'Liberation Sans', sans-serif;font-size:20.29px;line-height:20.29px;font-weight:400;font-style:normal;color:#111;transform:scaleX(1.0215);">Jocked</div>
<div class="t" style="left:863.46px;top:282.00px;font-family:'Liberation Sans', sans-serif;font-size:11.05px;line-height:11.05px;font-weight:400;font-style:normal;color:#1e1e1e;transform:scaleX(0.9692);-webkit-text-stroke:0.25px #1e1e1e;">Text Text</div>
<svg class="a" style="left:843.60px;top:304.80px;" width="51.20" height="18.30" viewBox="0 0 51.20 18.30"><rect x="0.00" y="0" width="1.10" height="18.30" fill="#222"/><rect x="1.90" y="0" width="3.00" height="18.30" fill="#333"/><rect x="6.60" y="0" width="1.10" height="18.30" fill="#111"/><rect x="8.50" y="0" width="0.90" height="18.30" fill="#333"/><rect x="11.60" y="0" width="1.40" height="18.30" fill="#111"/><rect x="14.00" y="0" width="2.40" height="18.30" fill="#555"/><rect x="17.70" y="0" width="1.40" height="18.30" fill="#111"/><rect x="19.90" y="0" width="1.40" height="18.30" fill="#111"/><rect x="22.10" y="0" width="3.00" height="18.30" fill="#222"/><rect x="26.40" y="0" width="1.10" height="18.30" fill="#111"/><rect x="28.80" y="0" width="1.40" height="18.30" fill="#777"/><rect x="31.50" y="0" width="0.90" height="18.30" fill="#555"/><rect x="33.70" y="0" width="3.00" height="18.30" fill="#333"/><rect x="38.90" y="0" width="1.10" height="18.30" fill="#111"/><rect x="41.00" y="0" width="1.80" height="18.30" fill="#222"/><rect x="43.60" y="0" width="2.40" height="18.30" fill="#222"/><rect x="46.80" y="0" width="1.40" height="18.30" fill="#555"/><rect x="49.50" y="0" width="1.70" height="18.30" fill="#111"/></svg>
<svg class="a" style="left:899.00px;top:309.00px;" width="32.00" height="14.10" viewBox="0 0 32.00 14.10"><rect x="0.00" y="0" width="2.40" height="14.10" fill="#222"/><rect x="3.70" y="0" width="3.00" height="14.10" fill="#777"/><rect x="8.90" y="0" width="0.90" height="14.10" fill="#333"/><rect x="10.80" y="0" width="3.00" height="14.10" fill="#111"/><rect x="14.80" y="0" width="0.90" height="14.10" fill="#222"/><rect x="17.40" y="0" width="1.10" height="14.10" fill="#333"/><rect x="20.70" y="0" width="0.90" height="14.10" fill="#555"/><rect x="22.60" y="0" width="0.90" height="14.10" fill="#777"/><rect x="24.50" y="0" width="1.80" height="14.10" fill="#222"/><rect x="27.30" y="0" width="1.80" height="14.10" fill="#111"/><rect x="29.90" y="0" width="1.10" height="14.10" fill="#555"/></svg>
<svg class="a" style="left:956.40px;top:243.60px;" width="133.30" height="86.00" viewBox="0 0 133.30 86.00"><rect x="1.10" y="1.10" width="131.10" height="83.80" rx="12.00" fill="#fff" stroke="#1e2a6e" stroke-width="2.20" stroke-dasharray="6.5 4.5" /></svg>
<div class="t" style="left:985.85px;top:258.00px;font-family:'Liberation Sans', sans-serif;font-size:20.29px;line-height:20.29px;font-weight:400;font-style:italic;color:#111;transform:scaleX(1.0221);">Jockled</div>
<div class="t" style="left:997.78px;top:286.00px;font-family:'Liberation Sans', sans-serif;font-size:9.25px;line-height:9.25px;font-weight:400;font-style:normal;color:#1e1e1e;transform:scaleX(1.2171);-webkit-text-stroke:0.25px #1e1e1e;">Pexl Text</div>
<svg class="a" style="left:970.00px;top:307.40px;" width="37.30" height="16.40" viewBox="0 0 37.30 16.40"><rect x="0.00" y="0" width="2.40" height="16.40" fill="#111"/><rect x="4.10" y="0" width="1.40" height="16.40" fill="#111"/><rect x="6.30" y="0" width="1.10" height="16.40" fill="#777"/><rect x="9.60" y="0" width="1.80" height="16.40" fill="#777"/><rect x="12.70" y="0" width="1.40" height="16.40" fill="#111"/><rect x="15.40" y="0" width="1.80" height="16.40" fill="#111"/><rect x="18.90" y="0" width="2.40" height="16.40" fill="#555"/><rect x="22.10" y="0" width="1.10" height="16.40" fill="#555"/><rect x="25.40" y="0" width="3.00" height="16.40" fill="#777"/><rect x="29.70" y="0" width="3.00" height="16.40" fill="#555"/><rect x="33.50" y="0" width="1.80" height="16.40" fill="#222"/><rect x="36.10" y="0" width="1.20" height="16.40" fill="#333"/></svg>
<svg class="a" style="left:1036.70px;top:308.50px;" width="40.10" height="15.30" viewBox="0 0 40.10 15.30"><rect x="0.00" y="0" width="1.40" height="15.30" fill="#111"/><rect x="3.10" y="0" width="3.00" height="15.30" fill="#111"/><rect x="6.90" y="0" width="2.40" height="15.30" fill="#111"/><rect x="10.60" y="0" width="2.40" height="15.30" fill="#111"/><rect x="15.20" y="0" width="1.10" height="15.30" fill="#111"/><rect x="17.10" y="0" width="1.80" height="15.30" fill="#333"/><rect x="19.70" y="0" width="1.10" height="15.30" fill="#111"/><rect x="23.00" y="0" width="1.80" height="15.30" fill="#111"/><rect x="27.00" y="0" width="0.90" height="15.30" fill="#111"/><rect x="30.10" y="0" width="0.90" height="15.30" fill="#555"/><rect x="33.20" y="0" width="1.80" height="15.30" fill="#111"/><rect x="36.00" y="0" width="0.90" height="15.30" fill="#555"/><rect x="37.90" y="0" width="1.40" height="15.30" fill="#333"/></svg>
<svg class="a" style="left:1115.60px;top:238.30px;" width="151.30" height="94.50" viewBox="0 0 151.30 94.50"><rect x="1.15" y="1.15" width="149.00" height="92.20" rx="13.00" fill="#fff" stroke="#1e6b58" stroke-width="2.30" stroke-dasharray="7 5" /></svg>
<div class="t" style="left:1159.29px;top:247.00px;font-family:'Liberation Sans', sans-serif;font-size:28.34px;line-height:28.34px;font-weight:400;font-style:normal;color:#111;transform:scaleX(1.0362);">Lstm</div>
<svg class="a" style="left:1128.90px;top:284.70px;" width="61.70" height="20.30" viewBox="0 0 61.70 20.30"><rect x="0.00" y="0" width="1.10" height="20.30" fill="#222"/><rect x="2.80" y="0" width="1.10" height="20.30" fill="#111"/><rect x="4.70" y="0" width="0.90" height="20.30" fill="#111"/><rect x="6.60" y="0" width="2.40" height="20.30" fill="#111"/><rect x="10.70" y="0" width="3.00" height="20.30" fill="#111"/><rect x="15.40" y="0" width="1.80" height="20.30" fill="#333"/><rect x="18.90" y="0" width="1.80" height="20.30" fill="#555"/><rect x="21.70" y="0" width="1.80" height="20.30" fill="#111"/><rect x="25.20" y="0" width="1.10" height="20.30" fill="#111"/><rect x="27.60" y="0" width="2.40" height="20.30" fill="#333"/><rect x="31.70" y="0" width="1.80" height="20.30" fill="#777"/><rect x="34.30" y="0" width="3.00" height="20.30" fill="#222"/><rect x="38.10" y="0" width="0.90" height="20.30" fill="#333"/><rect x="41.20" y="0" width="1.80" height="20.30" fill="#111"/><rect x="43.80" y="0" width="1.40" height="20.30" fill="#111"/><rect x="46.00" y="0" width="1.80" height="20.30" fill="#777"/><rect x="50.00" y="0" width="1.10" height="20.30" fill="#555"/><rect x="52.10" y="0" width="2.40" height="20.30" fill="#111"/><rect x="56.70" y="0" width="0.90" height="20.30" fill="#333"/><rect x="58.60" y="0" width="1.10" height="20.30" fill="#555"/></svg>
<svg class="a" style="left:1201.60px;top:284.70px;" width="52.30" height="20.30" viewBox="0 0 52.30 20.30"><rect x="0.00" y="0" width="1.80" height="20.30" fill="#555"/><rect x="3.10" y="0" width="1.40" height="20.30" fill="#111"/><rect x="5.50" y="0" width="3.00" height="20.30" fill="#111"/><rect x="9.80" y="0" width="2.40" height="20.30" fill="#333"/><rect x="14.40" y="0" width="0.90" height="20.30" fill="#222"/><rect x="17.50" y="0" width="2.40" height="20.30" fill="#777"/><rect x="20.70" y="0" width="3.00" height="20.30" fill="#333"/><rect x="24.70" y="0" width="3.00" height="20.30" fill="#333"/><rect x="29.40" y="0" width="1.10" height="20.30" fill="#111"/><rect x="31.50" y="0" width="0.90" height="20.30" fill="#111"/><rect x="33.40" y="0" width="2.40" height="20.30" fill="#555"/><rect x="36.60" y="0" width="3.00" height="20.30" fill="#333"/><rect x="40.40" y="0" width="1.40" height="20.30" fill="#111"/><rect x="42.80" y="0" width="3.00" height="20.30" fill="#333"/><rect x="46.60" y="0" width="1.40" height="20.30" fill="#111"/><rect x="49.70" y="0" width="1.40" height="20.30" fill="#222"/></svg>
<div class="t" style="left:1133.76px;top:313.00px;font-family:'Liberation Sans', sans-serif;font-size:12.35px;line-height:12.35px;font-weight:400;font-style:normal;color:#111;transform:scaleX(1.2257);">Pisor</div>
<div class="t" style="left:1213.77px;top:313.00px;font-family:'Liberation Sans', sans-serif;font-size:12.82px;line-height:12.82px;font-weight:400;font-style:normal;color:#111;transform:scaleX(1.0498);">13004</div>
<svg class="a" style="left:66.20px;top:358.70px;" width="158.00" height="96.80" viewBox="0 0 158.00 96.80"><defs><pattern id="zh" width="14" height="8" patternUnits="userSpaceOnUse"><rect width="14" height="8" fill="#d42232"/><path d="M0 8 L7 1 L14 8z" fill="#1c3a86"/><path d="M3.5 8 L7 4.5 L10.5 8z" fill="#2aa8a0"/><path d="M0 8 L7 1 L14 8" stroke="#fff" stroke-width="0.8" fill="none"/></pattern><pattern id="zv" width="14" height="8" patternUnits="userSpaceOnUse" patternTransform="rotate(90)"><rect width="14" height="8" fill="#d42232"/><path d="M0 8 L7 1 L14 8z" fill="#1c3a86"/><path d="M3.5 8 L7 4.5 L10.5 8z" fill="#2aa8a0"/><path d="M0 8 L7 1 L14 8" stroke="#fff" stroke-width="0.8" fill="none"/></pattern><clipPath id="c9"><rect width="158.0" height="96.8" rx="10"/></clipPath></defs><g clip-path="url(#c9)"><rect x="0" y="0" width="158.0" height="96.8" fill="url(#zv)"/><path d="M0 0 H158.0 L151.2 8 H6.5z" fill="url(#zh)"/><path d="M0 96.8 H158.0 L151.2 89.3 H6.5z" fill="url(#zh)"/></g></svg>
<svg class="a" style="left:72.70px;top:366.50px;" width="144.70" height="81.50" viewBox="0 0 144.70 81.50"><rect x="0.00" y="0.00" width="144.70" height="81.50" rx="4.00" fill="#ffed00" stroke="none" stroke-width="0.00" /></svg>
<div class="t" style="left:101.49px;top:375.00px;font-family:'Liberation Serif', serif;font-size:23.78px;line-height:23.78px;font-weight:400;font-style:normal;color:#111;transform:scaleX(1.0429);-webkit-text-stroke:0.4px #111;">Locklece</div>
<div class="t" style="left:119.90px;top:405.00px;font-family:'Liberation Sans', sans-serif;font-size:11.05px;line-height:11.05px;font-weight:400;font-style:normal;color:#1e1e1e;transform:scaleX(1.1056);-webkit-text-stroke:0.25px #1e1e1e;">Pay Text</div>
<div class="t" style="left:95.54px;top:428.00px;font-family:'Liberation Sans', sans-serif;font-size:12.42px;line-height:12.42px;font-weight:400;font-style:normal;color:#1a1a1a;transform:scaleX(1.0451);">Corelс SlerdLond</div>
<svg class="a" style="left:237.00px;top:361.70px;" width="132.00" height="90.10" viewBox="0 0 132.00 90.10"><rect x="1.15" y="1.15" width="129.70" height="87.80" rx="12.00" fill="#fff" stroke="#e8c63a" stroke-width="2.30" stroke-dasharray="7 5" /></svg>
<div class="t" style="left:268.07px;top:376.00px;font-family:'Liberation Sans', sans-serif;font-size:21.80px;line-height:21.80px;font-weight:400;font-style:normal;color:#111;transform:scaleX(0.9753);">Jackled</div>
<div class="t" style="left:277.17px;top:405.00px;font-family:'Liberation Sans', sans-serif;font-size:11.05px;line-height:11.05px;font-weight:400;font-style:normal;color:#1e1e1e;transform:scaleX(1.0269);-webkit-text-stroke:0.25px #1e1e1e;">Peyt Text</div>
<svg class="a" style="left:255.00px;top:427.10px;" width="38.10" height="16.50" viewBox="0 0 38.10 16.50"><rect x="0.00" y="0" width="2.40" height="16.50" fill="#111"/><rect x="4.10" y="0" width="1.80" height="16.50" fill="#555"/><rect x="6.70" y="0" width="1.10" height="16.50" fill="#333"/><rect x="9.50" y="0" width="1.40" height="16.50" fill="#777"/><rect x="11.90" y="0" width="0.90" height="16.50" fill="#555"/><rect x="14.50" y="0" width="1.40" height="16.50" fill="#111"/><rect x="16.90" y="0" width="3.00" height="16.50" fill="#222"/><rect x="20.70" y="0" width="1.80" height="16.50" fill="#111"/><rect x="24.70" y="0" width="1.40" height="16.50" fill="#333"/><rect x="27.80" y="0" width="1.40" height="16.50" fill="#777"/><rect x="30.50" y="0" width="1.80" height="16.50" fill="#111"/><rect x="33.60" y="0" width="3.00" height="16.50" fill="#222"/></svg>
<div class="t" style="left:319.54px;top:428.00px;font-family:'Liberation Sans', sans-serif;font-size:16.47px;line-height:16.47px;font-weight:700;font-style:normal;color:#111;transform:scaleX(0.8080);">20000</div>
<svg class="a" style="left:384.00px;top:359.00px;" width="145.20" height="95.80" viewBox="0 0 145.20 95.80"><rect x="2.30" y="2.30" width="140.60" height="91.20" rx="12.00" fill="#fff" stroke="#e3141c" stroke-width="4.60" stroke-dasharray="9 4.2" /></svg>
<div class="t" style="left:417.34px;top:377.00px;font-family:'Liberation Sans', sans-serif;font-size:22.36px;line-height:22.36px;font-weight:400;font-style:normal;color:#111;transform:scaleX(1.0214);">Jockled</div>
<div class="t" style="left:429.70px;top:404.00px;font-family:'Liberation Sans', sans-serif;font-size:11.63px;line-height:11.63px;font-weight:400;font-style:normal;color:#1e1e1e;transform:scaleX(1.0465);-webkit-text-stroke:0.25px #1e1e1e;">Nex Text</div>
<svg class="a" style="left:434.90px;top:429.30px;" width="81.60" height="15.00" viewBox="0 0 81.60 15.00"><rect x="0.00" y="0" width="1.80" height="15.00" fill="#555"/><rect x="3.50" y="0" width="1.80" height="15.00" fill="#555"/><rect x="7.50" y="0" width="1.10" height="15.00" fill="#111"/><rect x="10.80" y="0" width="1.80" height="15.00" fill="#777"/><rect x="14.80" y="0" width="1.10" height="15.00" fill="#111"/><rect x="17.60" y="0" width="1.40" height="15.00" fill="#111"/><rect x="19.80" y="0" width="2.40" height="15.00" fill="#777"/><rect x="23.00" y="0" width="2.40" height="15.00" fill="#333"/><rect x="27.10" y="0" width="3.00" height="15.00" fill="#777"/><rect x="32.30" y="0" width="3.00" height="15.00" fill="#111"/><rect x="37.50" y="0" width="0.90" height="15.00" fill="#555"/><rect x="39.20" y="0" width="0.90" height="15.00" fill="#111"/><rect x="41.10" y="0" width="1.10" height="15.00" fill="#555"/><rect x="43.00" y="0" width="1.80" height="15.00" fill="#222"/><rect x="46.50" y="0" width="2.40" height="15.00" fill="#111"/><rect x="51.10" y="0" width="1.10" height="15.00" fill="#777"/><rect x="53.50" y="0" width="1.80" height="15.00" fill="#111"/><rect x="56.10" y="0" width="1.80" height="15.00" fill="#777"/><rect x="59.20" y="0" width="1.80" height="15.00" fill="#555"/><rect x="61.80" y="0" width="3.00" height="15.00" fill="#222"/><rect x="66.10" y="0" width="1.10" height="15.00" fill="#555"/><rect x="68.50" y="0" width="0.90" height="15.00" fill="#111"/><rect x="71.60" y="0" width="0.90" height="15.00" fill="#333"/><rect x="73.30" y="0" width="1.40" height="15.00" fill="#333"/><rect x="75.50" y="0" width="0.90" height="15.00" fill="#777"/><rect x="77.20" y="0" width="1.10" height="15.00" fill="#111"/><rect x="79.10" y="0" width="1.80" height="15.00" fill="#333"/></svg>
<svg class="a" style="left:548.20px;top:362.00px;" width="134.80" height="91.00" viewBox="0 0 134.80 91.00"><rect x="1.15" y="1.15" width="132.50" height="88.70" rx="12.00" fill="#fff" stroke="#1a1a72" stroke-width="2.30" stroke-dasharray="6.5 4.5" /></svg>
<div class="t" style="left:577.85px;top:377.00px;font-family:'Liberation Sans', sans-serif;font-size:22.36px;line-height:22.36px;font-weight:400;font-style:normal;color:#111;transform:scaleX(1.0052);">Jockled</div>
<div class="t" style="left:591.35px;top:405.00px;font-family:'Liberation Sans', sans-serif;font-size:11.19px;line-height:11.19px;font-weight:400;font-style:normal;color:#1e1e1e;transform:scaleX(0.9868);-webkit-text-stroke:0.25px #1e1e1e;">Teyt Text</div>
<svg class="a" style="left:564.70px;top:428.60px;" width="36.70" height="16.00" viewBox="0 0 36.70 16.00"><rect x="0.00" y="0" width="1.80" height="16.00" fill="#222"/><rect x="4.00" y="0" width="3.00" height="16.00" fill="#222"/><rect x="8.00" y="0" width="1.80" height="16.00" fill="#111"/><rect x="11.10" y="0" width="1.80" height="16.00" fill="#222"/><rect x="14.60" y="0" width="3.00" height="16.00" fill="#555"/><rect x="18.60" y="0" width="2.40" height="16.00" fill="#111"/><rect x="23.20" y="0" width="1.10" height="16.00" fill="#333"/><rect x="25.60" y="0" width="1.10" height="16.00" fill="#222"/><rect x="27.70" y="0" width="0.90" height="16.00" fill="#555"/><rect x="29.60" y="0" width="0.90" height="16.00" fill="#555"/><rect x="31.80" y="0" width="3.00" height="16.00" fill="#333"/><rect x="35.60" y="0" width="0.90" height="16.00" fill="#111"/></svg>
<div class="t" style="left:631.50px;top:431.00px;font-family:'Liberation Sans', sans-serif;font-size:13.39px;line-height:13.39px;font-weight:400;font-style:normal;color:#111;transform:scaleX(1.1820);">Noail</div>
<svg class="a" style="left:696.70px;top:359.70px;" width="120.50" height="93.60" viewBox="0 0 120.50 93.60"><rect x="1.80" y="1.80" width="116.90" height="90.00" rx="12.00" fill="#fffdea" stroke="#ec8a1e" stroke-width="3.60" /></svg>
<div class="t" style="left:723.10px;top:373.00px;font-family:'Liberation Serif', serif;font-size:20.47px;line-height:20.47px;font-weight:400;font-style:normal;color:#111;transform:scaleX(1.0190);">Lackled</div>
<div class="t" style="left:733.16px;top:400.00px;font-family:'Liberation Sans', sans-serif;font-size:11.92px;line-height:11.92px;font-weight:400;font-style:normal;color:#1e1e1e;transform:scaleX(0.8963);-webkit-text-stroke:0.25px #1e1e1e;">Text Text</div>
<svg class="a" style="left:708.70px;top:426.60px;" width="98.10" height="17.40" viewBox="0 0 98.10 17.40"><rect x="0.00" y="0" width="1.40" height="17.40" fill="#222"/><rect x="2.40" y="0" width="3.00" height="17.40" fill="#111"/><rect x="6.40" y="0" width="1.10" height="17.40" fill="#777"/><rect x="8.50" y="0" width="1.10" height="17.40" fill="#111"/><rect x="11.80" y="0" width="1.10" height="17.40" fill="#777"/><rect x="14.20" y="0" width="0.90" height="17.40" fill="#333"/><rect x="16.10" y="0" width="3.00" height="17.40" fill="#555"/><rect x="19.90" y="0" width="1.40" height="17.40" fill="#111"/><rect x="22.10" y="0" width="1.40" height="17.40" fill="#333"/><rect x="25.20" y="0" width="1.10" height="17.40" fill="#222"/><rect x="27.60" y="0" width="1.10" height="17.40" fill="#333"/><rect x="30.90" y="0" width="2.40" height="17.40" fill="#333"/><rect x="34.60" y="0" width="1.80" height="17.40" fill="#777"/><rect x="37.70" y="0" width="3.00" height="17.40" fill="#111"/><rect x="42.00" y="0" width="2.40" height="17.40" fill="#777"/><rect x="45.70" y="0" width="3.00" height="17.40" fill="#333"/><rect x="50.90" y="0" width="2.40" height="17.40" fill="#777"/><rect x="54.30" y="0" width="1.80" height="17.40" fill="#777"/><rect x="57.80" y="0" width="2.40" height="17.40" fill="#111"/><rect x="61.50" y="0" width="1.10" height="17.40" fill="#111"/><rect x="64.80" y="0" width="1.40" height="17.40" fill="#222"/><rect x="67.50" y="0" width="1.80" height="17.40" fill="#222"/><rect x="71.50" y="0" width="1.40" height="17.40" fill="#333"/><rect x="73.90" y="0" width="2.40" height="17.40" fill="#333"/><rect x="78.50" y="0" width="1.10" height="17.40" fill="#555"/><rect x="80.60" y="0" width="1.10" height="17.40" fill="#777"/><rect x="83.00" y="0" width="1.10" height="17.40" fill="#111"/><rect x="85.80" y="0" width="3.00" height="17.40" fill="#777"/><rect x="90.50" y="0" width="1.80" height="17.40" fill="#111"/><rect x="94.00" y="0" width="0.90" height="17.40" fill="#111"/><rect x="95.90" y="0" width="1.80" height="17.40" fill="#777"/></svg>
<svg class="a" style="left:832.00px;top:358.70px;" width="110.80" height="97.30" viewBox="0 0 110.80 97.30"><rect x="1.15" y="1.15" width="108.50" height="95.00" rx="14.00" fill="#fff" stroke="#1e2470" stroke-width="2.30" stroke-dasharray="6.5 4.5" /></svg>
<div class="t" style="left:856.21px;top:377.00px;font-family:'Liberation Serif', serif;font-size:22.20px;line-height:22.20px;font-weight:400;font-style:normal;color:#111;transform:scaleX(1.0597);">Jostile</div>
<div class="t" style="left:863.96px;top:405.00px;font-family:'Liberation Sans', sans-serif;font-size:11.05px;line-height:11.05px;font-weight:400;font-style:normal;color:#1e1e1e;transform:scaleX(0.9801);-webkit-text-stroke:0.25px #1e1e1e;">Text Text</div>
<svg class="a" style="left:844.00px;top:429.00px;" width="41.60" height="20.50" viewBox="0 0 41.60 20.50"><rect x="0.00" y="0" width="0.90" height="20.50" fill="#555"/><rect x="3.10" y="0" width="1.10" height="20.50" fill="#222"/><rect x="5.50" y="0" width="1.40" height="20.50" fill="#777"/><rect x="7.70" y="0" width="3.00" height="20.50" fill="#333"/><rect x="12.00" y="0" width="1.80" height="20.50" fill="#777"/><rect x="15.50" y="0" width="1.80" height="20.50" fill="#111"/><rect x="18.60" y="0" width="1.10" height="20.50" fill="#222"/><rect x="21.00" y="0" width="1.40" height="20.50" fill="#222"/><rect x="24.60" y="0" width="1.10" height="20.50" fill="#111"/><rect x="27.90" y="0" width="3.00" height="20.50" fill="#777"/><rect x="32.20" y="0" width="1.10" height="20.50" fill="#111"/><rect x="34.10" y="0" width="0.90" height="20.50" fill="#555"/><rect x="36.30" y="0" width="0.90" height="20.50" fill="#111"/><rect x="38.50" y="0" width="1.10" height="20.50" fill="#333"/></svg>
<svg class="a" style="left:891.00px;top:435.00px;" width="38.30" height="14.50" viewBox="0 0 38.30 14.50"><rect x="0.00" y="0" width="1.10" height="14.50" fill="#111"/><rect x="3.30" y="0" width="3.00" height="14.50" fill="#111"/><rect x="7.30" y="0" width="1.10" height="14.50" fill="#111"/><rect x="9.20" y="0" width="3.00" height="14.50" fill="#111"/><rect x="13.50" y="0" width="1.10" height="14.50" fill="#111"/><rect x="15.90" y="0" width="1.80" height="14.50" fill="#777"/><rect x="19.00" y="0" width="1.40" height="14.50" fill="#333"/><rect x="21.70" y="0" width="1.40" height="14.50" fill="#111"/><rect x="24.10" y="0" width="1.40" height="14.50" fill="#222"/><rect x="26.50" y="0" width="1.40" height="14.50" fill="#777"/><rect x="30.10" y="0" width="1.80" height="14.50" fill="#111"/><rect x="34.10" y="0" width="1.80" height="14.50" fill="#333"/><rect x="37.60" y="0" width="0.70" height="14.50" fill="#333"/></svg>
<svg class="a" style="left:953.70px;top:356.70px;" width="144.00" height="100.30" viewBox="0 0 144.00 100.30"><rect x="1.40" y="1.40" width="141.20" height="97.50" rx="12.00" fill="#e8281e" stroke="#2a1a6a" stroke-width="2.80" /></svg>
<svg class="a" style="left:960.00px;top:363.50px;" width="131.00" height="86.00" viewBox="0 0 131.00 86.00"><path d="M6 0 H125 Q131 0 131 6 V58.4 H0 V6 Q0 0 6 0Z" fill="#7fa84d"/><path d="M0 58.4 H131 V80 Q131 86 125 86 H6 Q0 86 0 80Z" fill="#fff"/></svg>
<div class="t" style="left:989.66px;top:375.00px;font-family:'Liberation Sans', sans-serif;font-size:21.25px;line-height:21.25px;font-weight:400;font-style:normal;color:#eef5d8;transform:scaleX(1.0205);-webkit-text-stroke:0.5px #eef5d8;">Jackled</div>
<div class="t" style="left:998.64px;top:402.00px;font-family:'Liberation Sans', sans-serif;font-size:11.32px;line-height:11.32px;font-weight:400;font-style:normal;color:#eef5d8;transform:scaleX(1.0378);">Pexl Text</div>
<svg class="a" style="left:971.20px;top:427.80px;" width="39.70" height="18.00" viewBox="0 0 39.70 18.00"><rect x="0.00" y="0" width="1.40" height="18.00" fill="#333"/><rect x="3.10" y="0" width="1.40" height="18.00" fill="#333"/><rect x="5.50" y="0" width="1.80" height="18.00" fill="#111"/><rect x="9.00" y="0" width="3.00" height="18.00" fill="#777"/><rect x="13.30" y="0" width="1.10" height="18.00" fill="#777"/><rect x="15.40" y="0" width="0.90" height="18.00" fill="#222"/><rect x="17.60" y="0" width="1.40" height="18.00" fill="#777"/><rect x="20.00" y="0" width="3.00" height="18.00" fill="#555"/><rect x="24.30" y="0" width="0.90" height="18.00" fill="#111"/><rect x="27.40" y="0" width="1.40" height="18.00" fill="#111"/><rect x="29.80" y="0" width="2.40" height="18.00" fill="#777"/><rect x="33.00" y="0" width="1.80" height="18.00" fill="#333"/><rect x="37.00" y="0" width="2.70" height="18.00" fill="#777"/></svg>
<svg class="a" style="left:1039.00px;top:430.00px;" width="42.50" height="15.80" viewBox="0 0 42.50 15.80"><rect x="0.00" y="0" width="2.40" height="15.80" fill="#333"/><rect x="3.70" y="0" width="1.40" height="15.80" fill="#222"/><rect x="6.10" y="0" width="3.00" height="15.80" fill="#777"/><rect x="11.30" y="0" width="3.00" height="15.80" fill="#222"/><rect x="15.10" y="0" width="0.90" height="15.80" fill="#111"/><rect x="17.70" y="0" width="3.00" height="15.80" fill="#333"/><rect x="22.00" y="0" width="2.40" height="15.80" fill="#222"/><rect x="26.10" y="0" width="1.10" height="15.80" fill="#555"/><rect x="28.00" y="0" width="1.10" height="15.80" fill="#111"/><rect x="30.10" y="0" width="3.00" height="15.80" fill="#555"/><rect x="35.30" y="0" width="3.00" height="15.80" fill="#111"/><rect x="39.60" y="0" width="2.40" height="15.80" fill="#111"/></svg>
<svg class="a" style="left:1114.70px;top:358.20px;" width="152.70" height="99.30" viewBox="0 0 152.70 99.30"><rect x="1.60" y="1.60" width="149.50" height="96.10" rx="12.00" fill="#fff" stroke="#3a6a9c" stroke-width="3.20" /></svg>
<div class="a" style="left:1119.20px;top:366.50px;width:144.20px;height:55.70px;background:#3a6e9f"></div>
<div class="t" style="left:1154.88px;top:374.00px;font-family:'Liberation Sans', sans-serif;font-size:22.36px;line-height:22.36px;font-weight:700;font-style:normal;color:#fff;transform:scaleX(0.8769);">Tackled</div>
<div class="t" style="left:1166.14px;top:401.00px;font-family:'Liberation Sans', sans-serif;font-size:12.50px;line-height:12.50px;font-weight:400;font-style:normal;color:#fff;transform:scaleX(0.9203);">Text Text</div>
<svg class="a" style="left:1129.00px;top:428.60px;" width="56.80" height="19.90" viewBox="0 0 56.80 19.90"><rect x="0.00" y="0" width="1.10" height="19.90" fill="#111"/><rect x="2.80" y="0" width="1.40" height="19.90" fill="#111"/><rect x="5.20" y="0" width="1.80" height="19.90" fill="#777"/><rect x="8.70" y="0" width="1.10" height="19.90" fill="#333"/><rect x="11.10" y="0" width="1.80" height="19.90" fill="#222"/><rect x="13.90" y="0" width="1.40" height="19.90" fill="#777"/><rect x="16.10" y="0" width="1.40" height="19.90" fill="#555"/><rect x="18.50" y="0" width="1.10" height="19.90" fill="#111"/><rect x="20.60" y="0" width="1.10" height="19.90" fill="#777"/><rect x="23.00" y="0" width="2.40" height="19.90" fill="#555"/><rect x="26.40" y="0" width="3.00" height="19.90" fill="#333"/><rect x="30.40" y="0" width="3.00" height="19.90" fill="#222"/><rect x="34.70" y="0" width="0.90" height="19.90" fill="#222"/><rect x="37.30" y="0" width="1.10" height="19.90" fill="#777"/><rect x="40.10" y="0" width="2.40" height="19.90" fill="#222"/><rect x="44.70" y="0" width="2.40" height="19.90" fill="#555"/><rect x="48.40" y="0" width="1.40" height="19.90" fill="#555"/><rect x="51.10" y="0" width="2.40" height="19.90" fill="#111"/><rect x="54.80" y="0" width="1.80" height="19.90" fill="#555"/></svg>
<svg class="a" style="left:1204.60px;top:428.60px;" width="50.10" height="19.90" viewBox="0 0 50.10 19.90"><rect x="0.00" y="0" width="3.00" height="19.90" fill="#111"/><rect x="5.20" y="0" width="0.90" height="19.90" fill="#555"/><rect x="7.10" y="0" width="1.80" height="19.90" fill="#222"/><rect x="11.10" y="0" width="1.40" height="19.90" fill="#555"/><rect x="13.50" y="0" width="2.40" height="19.90" fill="#222"/><rect x="16.70" y="0" width="1.40" height="19.90" fill="#333"/><rect x="19.40" y="0" width="1.40" height="19.90" fill="#111"/><rect x="22.10" y="0" width="1.40" height="19.90" fill="#111"/><rect x="25.70" y="0" width="2.40" height="19.90" fill="#111"/><rect x="28.90" y="0" width="1.10" height="19.90" fill="#111"/><rect x="32.20" y="0" width="1.80" height="19.90" fill="#333"/><rect x="34.80" y="0" width="0.90" height="19.90" fill="#333"/><rect x="36.50" y="0" width="0.90" height="19.90" fill="#555"/><rect x="39.10" y="0" width="1.80" height="19.90" fill="#333"/><rect x="42.20" y="0" width="2.40" height="19.90" fill="#555"/><rect x="45.60" y="0" width="3.00" height="19.90" fill="#333"/></svg>
<svg class="a" style="left:70.20px;top:482.80px;" width="151.50" height="95.50" viewBox="0 0 151.50 95.50"><rect x="2.30" y="2.30" width="146.90" height="90.90" rx="12.00" fill="#d2f7e8" stroke="#2ab584" stroke-width="4.60" /></svg>
<div class="t" style="left:106.03px;top:501.00px;font-family:'Liberation Sans', sans-serif;font-size:23.32px;line-height:23.32px;font-weight:400;font-style:normal;color:#111;transform:scaleX(1.0180);">Jockled</div>
<div class="t" style="left:118.95px;top:529.00px;font-family:'Liberation Sans', sans-serif;font-size:12.06px;line-height:12.06px;font-weight:400;font-style:normal;color:#1e1e1e;transform:scaleX(0.9645);-webkit-text-stroke:0.25px #1e1e1e;">New Text</div>
<div class="t" style="left:87.23px;top:554.00px;font-family:'Liberation Sans', sans-serif;font-size:13.52px;line-height:13.52px;font-weight:400;font-style:normal;color:#111;transform:scaleX(1.0556);">Loer Thedn·</div>
<div class="t" style="left:167.17px;top:553.00px;font-family:'Liberation Sans', sans-serif;font-size:14.04px;line-height:14.04px;font-weight:700;font-style:normal;color:#111;transform:scaleX(0.9522);">A8000</div>
<svg class="a" style="left:236.70px;top:484.30px;" width="131.70" height="92.50" viewBox="0 0 131.70 92.50"><rect x="2.10" y="2.10" width="127.50" height="88.30" rx="13.00" fill="#fff" stroke="#eef23c" stroke-width="4.20" /><rect x="1.30" y="1.30" width="129.10" height="89.90" rx="13.00" fill="none" stroke="#2a3a12" stroke-width="2.60" stroke-dasharray="7 5"  transform="translate(0.8,0.8) scale(0.988)"/></svg>
<div class="t" style="left:264.88px;top:500.00px;font-family:'Liberation Serif', serif;font-size:23.06px;line-height:23.06px;font-weight:400;font-style:normal;color:#111;transform:scaleX(1.0783);">Jockesd</div>
<div class="t" style="left:277.16px;top:529.00px;font-family:'Liberation Sans', sans-serif;font-size:10.90px;line-height:10.90px;font-weight:400;font-style:normal;color:#1e1e1e;transform:scaleX(1.0539);-webkit-text-stroke:0.25px #1e1e1e;">Peyt Text</div>
<svg class="a" style="left:251.20px;top:550.60px;" width="35.50" height="15.00" viewBox="0 0 35.50 15.00"><rect x="0.00" y="0" width="3.00" height="15.00" fill="#777"/><rect x="4.00" y="0" width="1.40" height="15.00" fill="#777"/><rect x="6.20" y="0" width="1.40" height="15.00" fill="#555"/><rect x="8.60" y="0" width="0.90" height="15.00" fill="#333"/><rect x="11.20" y="0" width="0.90" height="15.00" fill="#111"/><rect x="13.10" y="0" width="1.40" height="15.00" fill="#333"/><rect x="16.70" y="0" width="1.80" height="15.00" fill="#333"/><rect x="19.50" y="0" width="1.10" height="15.00" fill="#222"/><rect x="21.90" y="0" width="1.40" height="15.00" fill="#333"/><rect x="24.10" y="0" width="3.00" height="15.00" fill="#555"/><rect x="28.80" y="0" width="1.80" height="15.00" fill="#111"/><rect x="31.60" y="0" width="2.40" height="15.00" fill="#111"/><rect x="34.80" y="0" width="0.70" height="15.00" fill="#111"/></svg>
<div class="t" style="left:318.53px;top:553.00px;font-family:'Liberation Sans', sans-serif;font-size:13.89px;line-height:13.89px;font-weight:700;font-style:normal;color:#111;transform:scaleX(0.9846);">93800</div>
<svg class="a" style="left:384.00px;top:481.70px;" width="144.90" height="96.60" viewBox="0 0 144.90 96.60"><rect x="2.30" y="2.30" width="140.30" height="92.00" rx="12.00" fill="#fff" stroke="#e3141c" stroke-width="4.60" stroke-dasharray="9 4.2" /></svg>
<div class="t" style="left:414.69px;top:499.00px;font-family:'Liberation Serif', serif;font-size:24.79px;line-height:24.79px;font-weight:400;font-style:normal;color:#111;">Lockled</div>
<div class="t" style="left:430.16px;top:529.00px;font-family:'Liberation Sans', sans-serif;font-size:11.34px;line-height:11.34px;font-weight:400;font-style:normal;color:#1e1e1e;transform:scaleX(1.0072);-webkit-text-stroke:0.25px #1e1e1e;">Feyr Text</div>
<svg class="a" style="left:434.10px;top:553.10px;" width="81.60" height="13.50" viewBox="0 0 81.60 13.50"><rect x="0.00" y="0" width="1.10" height="13.50" fill="#333"/><rect x="2.80" y="0" width="3.00" height="13.50" fill="#222"/><rect x="7.50" y="0" width="1.10" height="13.50" fill="#333"/><rect x="10.80" y="0" width="1.10" height="13.50" fill="#555"/><rect x="14.10" y="0" width="1.10" height="13.50" fill="#111"/><rect x="16.00" y="0" width="1.40" height="13.50" fill="#555"/><rect x="19.10" y="0" width="0.90" height="13.50" fill="#111"/><rect x="21.00" y="0" width="1.10" height="13.50" fill="#777"/><rect x="22.90" y="0" width="1.80" height="13.50" fill="#777"/><rect x="26.40" y="0" width="2.40" height="13.50" fill="#333"/><rect x="29.60" y="0" width="1.40" height="13.50" fill="#555"/><rect x="32.70" y="0" width="3.00" height="13.50" fill="#111"/><rect x="37.00" y="0" width="0.90" height="13.50" fill="#111"/><rect x="38.70" y="0" width="0.90" height="13.50" fill="#111"/><rect x="41.30" y="0" width="1.10" height="13.50" fill="#555"/><rect x="43.70" y="0" width="1.80" height="13.50" fill="#333"/><rect x="46.50" y="0" width="1.10" height="13.50" fill="#777"/><rect x="48.40" y="0" width="1.80" height="13.50" fill="#111"/><rect x="51.00" y="0" width="1.10" height="13.50" fill="#111"/><rect x="54.30" y="0" width="3.00" height="13.50" fill="#111"/><rect x="58.10" y="0" width="2.40" height="13.50" fill="#333"/><rect x="62.70" y="0" width="1.80" height="13.50" fill="#111"/><rect x="65.80" y="0" width="1.10" height="13.50" fill="#555"/><rect x="68.60" y="0" width="1.40" height="13.50" fill="#222"/><rect x="71.70" y="0" width="2.40" height="13.50" fill="#333"/><rect x="75.40" y="0" width="1.80" height="13.50" fill="#333"/><rect x="78.50" y="0" width="0.90" height="13.50" fill="#111"/><rect x="80.40" y="0" width="1.20" height="13.50" fill="#777"/></svg>
<svg class="a" style="left:550.50px;top:481.70px;" width="136.20" height="96.90" viewBox="0 0 136.20 96.90"><rect x="0.00" y="0.00" width="136.20" height="96.90" rx="8.00" fill="#a73277" stroke="none" stroke-width="0.00" /></svg>
<svg class="a" style="left:555.50px;top:486.70px;" width="126.20" height="86.90" viewBox="0 0 126.20 86.90"><rect x="0.75" y="0.75" width="124.70" height="85.40" rx="7.00" fill="none" stroke="#f6bfe0" stroke-width="1.50" /></svg>
<div class="t" style="left:577.89px;top:500.00px;font-family:'Liberation Serif', serif;font-size:23.06px;line-height:23.06px;font-weight:400;font-style:normal;color:#fff;transform:scaleX(1.0757);-webkit-text-stroke:0.6px #fff;">Pockled</div>
<div class="t" style="left:593.64px;top:530.00px;font-family:'Liberation Sans', sans-serif;font-size:11.92px;line-height:11.92px;font-weight:400;font-style:normal;color:#fff;transform:scaleX(0.9713);-webkit-text-stroke:0.35px #fff;">Text Text</div>
<div class="t" style="left:596.96px;top:554.00px;font-family:'Liberation Sans', sans-serif;font-size:12.42px;line-height:12.42px;font-weight:400;font-style:normal;color:#fff;transform:scaleX(1.0195);-webkit-text-stroke:0.35px #fff;">Chreeti Leall</div>
<svg class="a" style="left:695.20px;top:481.70px;" width="125.30" height="97.30" viewBox="0 0 125.30 97.30"><rect x="0.00" y="0.00" width="125.30" height="97.30" rx="8.00" fill="#085ae8" stroke="none" stroke-width="0.00" /></svg>
<svg class="a" style="left:700.20px;top:486.70px;" width="115.30" height="87.30" viewBox="0 0 115.30 87.30"><rect x="0.75" y="0.75" width="113.80" height="85.80" rx="7.00" fill="none" stroke="#e8f0ff" stroke-width="1.50" /></svg>
<div class="t" style="left:725.81px;top:494.00px;font-family:'Liberation Sans', sans-serif;font-size:19.60px;line-height:19.60px;font-weight:700;font-style:normal;color:#fff;transform:scaleX(0.8823);">Tockled</div>
<div class="t" style="left:736.65px;top:519.00px;font-family:'Liberation Sans', sans-serif;font-size:10.21px;line-height:10.21px;font-weight:400;font-style:normal;color:#eef3ff;transform:scaleX(1.1311);-webkit-text-stroke:0.4px #eef3ff;">Pockline</div>
<div class="t" style="left:736.98px;top:532.00px;font-family:'Liberation Sans', sans-serif;font-size:10.90px;line-height:10.90px;font-weight:400;font-style:normal;color:#fff;transform:scaleX(0.8957);">Text Text</div>
<svg class="a" style="left:716.00px;top:549.00px;" width="80.00" height="21.00" viewBox="0 0 80.00 21.00"><circle cx="3" cy="6" r="2" fill="#2a6a70"/><circle cx="13" cy="3.5" r="2.3" fill="#f07030"/><path d="M24 6 Q27 2 31 3 Q36 1 39 5 Q42 10 40 18 Q33 21 24 19 Q21 12 24 6z" fill="#f6f2f4"/><path d="M29 11 Q29 7 32 7 Q35 7 35 10" stroke="#5a3040" stroke-width="1.6" fill="none"/><circle cx="52" cy="11" r="8" fill="#e8332a"/><path d="M66 5 L76 17 M76 5 L66 17" stroke="#d8302a" stroke-width="2.6"/></svg>
<svg class="a" style="left:833.20px;top:483.20px;" width="124.80" height="96.60" viewBox="0 0 124.80 96.60"><rect x="1.30" y="1.30" width="122.20" height="94.00" rx="14.00" fill="#fff" stroke="#2a3340" stroke-width="2.60" stroke-dasharray="7 5" /></svg>
<div class="t" style="left:858.09px;top:500.00px;font-family:'Liberation Serif', serif;font-size:23.78px;line-height:23.78px;font-weight:400;font-style:normal;color:#111;transform:scaleX(1.0146);">Jockled</div>
<div class="t" style="left:869.86px;top:529.00px;font-family:'Liberation Sans', sans-serif;font-size:10.90px;line-height:10.90px;font-weight:400;font-style:normal;color:#1e1e1e;-webkit-text-stroke:0.25px #1e1e1e;">Text Teat</div>
<svg class="a" style="left:850.00px;top:553.10px;" width="53.00" height="19.90" viewBox="0 0 53.00 19.90"><rect x="0.00" y="0" width="1.10" height="19.90" fill="#111"/><rect x="1.90" y="0" width="2.40" height="19.90" fill="#333"/><rect x="5.30" y="0" width="3.00" height="19.90" fill="#111"/><rect x="9.60" y="0" width="0.90" height="19.90" fill="#111"/><rect x="11.80" y="0" width="0.90" height="19.90" fill="#222"/><rect x="14.90" y="0" width="1.10" height="19.90" fill="#555"/><rect x="17.70" y="0" width="3.00" height="19.90" fill="#111"/><rect x="22.90" y="0" width="0.90" height="19.90" fill="#555"/><rect x="25.10" y="0" width="1.40" height="19.90" fill="#333"/><rect x="27.50" y="0" width="1.10" height="19.90" fill="#111"/><rect x="30.80" y="0" width="2.40" height="19.90" fill="#777"/><rect x="35.40" y="0" width="0.90" height="19.90" fill="#777"/><rect x="37.60" y="0" width="2.40" height="19.90" fill="#222"/><rect x="41.30" y="0" width="1.10" height="19.90" fill="#333"/><rect x="43.70" y="0" width="3.00" height="19.90" fill="#555"/><rect x="47.70" y="0" width="1.40" height="19.90" fill="#222"/><rect x="50.10" y="0" width="1.80" height="19.90" fill="#111"/></svg>
<svg class="a" style="left:907.60px;top:555.80px;" width="38.90" height="17.20" viewBox="0 0 38.90 17.20"><rect x="0.00" y="0" width="1.40" height="17.20" fill="#111"/><rect x="2.20" y="0" width="2.40" height="17.20" fill="#222"/><rect x="6.30" y="0" width="1.80" height="17.20" fill="#555"/><rect x="9.40" y="0" width="1.10" height="17.20" fill="#777"/><rect x="11.50" y="0" width="1.40" height="17.20" fill="#333"/><rect x="13.70" y="0" width="1.10" height="17.20" fill="#555"/><rect x="16.50" y="0" width="0.90" height="17.20" fill="#111"/><rect x="18.20" y="0" width="3.00" height="17.20" fill="#333"/><rect x="22.90" y="0" width="0.90" height="17.20" fill="#555"/><rect x="25.50" y="0" width="1.40" height="17.20" fill="#111"/><rect x="27.90" y="0" width="0.90" height="17.20" fill="#555"/><rect x="30.10" y="0" width="3.00" height="17.20" fill="#111"/><rect x="35.30" y="0" width="1.10" height="17.20" fill="#777"/><rect x="37.70" y="0" width="1.20" height="17.20" fill="#222"/></svg>
<svg class="a" style="left:967.00px;top:483.20px;" width="131.70" height="95.80" viewBox="0 0 131.70 95.80"><rect x="0.00" y="0.00" width="131.70" height="95.80" rx="10.00" fill="#6e1616" stroke="none" stroke-width="0.00" /></svg>
<svg class="a" style="left:967.00px;top:483.20px;" width="131.70" height="95.80" viewBox="0 0 131.70 95.80"><rect x="3" y="3" width="125.7" height="89.8" rx="8" fill="none" stroke="#c8b030" stroke-width="2" stroke-dasharray="1.5 9"/></svg>
<svg class="a" style="left:974.20px;top:488.50px;" width="117.80" height="86.50" viewBox="0 0 117.80 86.50"><defs><clipPath id="c23"><rect width="117.8" height="86.5" rx="6"/></clipPath></defs><g clip-path="url(#c23)"><rect width="117.8" height="86.5" fill="#fcf398" stroke="#dcd080" stroke-width="1.5"/><path d="M76.6 0 H117.8 V39.5z" fill="#8e1420"/><path d="M96 6 l8 8 M100 4 l8 8" stroke="#f0d0d0" stroke-width="1" opacity="0.7"/><path d="M0 42 L0 86.5 L42 86.5z" fill="#f6f6f8"/><path d="M0 40 L9 47 L0 49z" fill="#9a2030"/><path d="M34 86.5 L46 86.5 L38 79z" fill="#7a1420"/></g></svg>
<svg class="a" style="left:974.50px;top:540.00px;" width="15.00" height="31.00" viewBox="0 0 15.00 31.00"><rect x="0" y="0.0" width="15" height="1.6" fill="#111"/><rect x="0" y="3.0" width="15" height="2.2" fill="#111"/><rect x="0" y="6.5" width="15" height="1.2" fill="#111"/><rect x="0" y="9.0" width="15" height="2.0" fill="#111"/><rect x="0" y="12.5" width="15" height="2.4" fill="#111"/><rect x="0" y="16.5" width="15" height="1.2" fill="#111"/><rect x="0" y="19.0" width="15" height="2.2" fill="#111"/><rect x="0" y="22.5" width="15" height="1.5" fill="#111"/><rect x="0" y="25.5" width="15" height="2.3" fill="#111"/><rect x="0" y="29.0" width="15" height="1.8" fill="#111"/></svg>
<svg class="a" style="left:993.00px;top:553.00px;" width="10.00" height="20.00" viewBox="0 0 10.00 20.00"><path d="M2 1h5M1 4h7M2 7h5M1 10h6M2 13h6M1 16h5M3 19h5" stroke="#777" stroke-width="1.2"/></svg>
<div class="t" style="left:1001.89px;top:501.00px;font-family:'Liberation Serif', serif;font-size:23.35px;line-height:23.35px;font-weight:400;font-style:normal;color:#111;transform:scaleX(1.0569);">Lotted</div>
<div class="t" style="left:1007.05px;top:530.00px;font-family:'Liberation Sans', sans-serif;font-size:11.48px;line-height:11.48px;font-weight:400;font-style:normal;color:#1e1e1e;transform:scaleX(1.0101);-webkit-text-stroke:0.25px #1e1e1e;">Feyt Text</div>
<div class="t" style="left:1021.45px;top:556.00px;font-family:'Liberation Sans', sans-serif;font-size:14.61px;line-height:14.61px;font-weight:700;font-style:normal;color:#111;transform:scaleX(0.9442);">Taxs1000</div>
<svg class="a" style="left:1115.50px;top:484.70px;" width="151.50" height="93.90" viewBox="0 0 151.50 93.90"><rect x="1.20" y="1.20" width="149.10" height="91.50" rx="13.00" fill="#fff" stroke="#9a2a8a" stroke-width="2.40" stroke-dasharray="6.5 4.5" /></svg>
<div class="t" style="left:1154.33px;top:499.00px;font-family:'Liberation Serif', serif;font-size:25.80px;line-height:25.80px;font-weight:400;font-style:normal;color:#111;transform:scaleX(1.0331);">Laiked</div>
<div class="t" style="left:1164.63px;top:530.00px;font-family:'Liberation Sans', sans-serif;font-size:11.48px;line-height:11.48px;font-weight:400;font-style:normal;color:#1e1e1e;transform:scaleX(1.0324);-webkit-text-stroke:0.25px #1e1e1e;">Feyr Text</div>
<div class="t" style="left:1159.48px;top:556.00px;font-family:'Liberation Sans', sans-serif;font-size:13.66px;line-height:13.66px;font-weight:400;font-style:normal;color:#111;transform:scaleX(1.0842);-webkit-text-stroke:0.25px #111;">Reert</div>
<div class="t" style="left:1217.02px;top:556.00px;font-family:'Liberation Sans', sans-serif;font-size:13.46px;line-height:13.46px;font-weight:400;font-style:normal;color:#111;transform:scaleX(1.1292);-webkit-text-stroke:0.45px #111;">3025</div>
<svg class="a" style="left:71.00px;top:611.00px;" width="150.20" height="102.20" viewBox="0 0 150.20 102.20"><rect x="1.50" y="1.50" width="147.20" height="99.20" rx="12.00" fill="#fff" stroke="#111" stroke-width="3.00" stroke-dasharray="4.2 3.2" /></svg>
<div class="t" style="left:103.25px;top:627.00px;font-family:'Liberation Serif', serif;font-size:25.22px;line-height:25.22px;font-weight:400;font-style:normal;color:#111;transform:scaleX(1.0269);">Lockied</div>
<div class="t" style="left:120.05px;top:659.00px;font-family:'Liberation Sans', sans-serif;font-size:10.76px;line-height:10.76px;font-weight:400;font-style:normal;color:#1e1e1e;transform:scaleX(1.0774);-webkit-text-stroke:0.25px #1e1e1e;">Peyi Text</div>
<svg class="a" style="left:86.90px;top:683.90px;" width="118.90" height="19.50" viewBox="0 0 118.90 19.50"><rect x="0.00" y="0" width="3.00" height="19.50" fill="#333"/><rect x="5.20" y="0" width="1.10" height="19.50" fill="#111"/><rect x="7.30" y="0" width="1.10" height="19.50" fill="#111"/><rect x="9.20" y="0" width="3.00" height="19.50" fill="#111"/><rect x="13.50" y="0" width="3.00" height="19.50" fill="#111"/><rect x="18.20" y="0" width="1.80" height="19.50" fill="#777"/><rect x="20.80" y="0" width="0.90" height="19.50" fill="#555"/><rect x="22.70" y="0" width="1.80" height="19.50" fill="#777"/><rect x="26.20" y="0" width="3.00" height="19.50" fill="#222"/><rect x="30.90" y="0" width="0.90" height="19.50" fill="#777"/><rect x="33.10" y="0" width="2.40" height="19.50" fill="#111"/><rect x="36.80" y="0" width="1.40" height="19.50" fill="#111"/><rect x="40.40" y="0" width="3.00" height="19.50" fill="#222"/><rect x="44.20" y="0" width="1.10" height="19.50" fill="#222"/><rect x="46.60" y="0" width="3.00" height="19.50" fill="#111"/><rect x="50.90" y="0" width="0.90" height="19.50" fill="#111"/><rect x="54.00" y="0" width="1.10" height="19.50" fill="#333"/><rect x="56.40" y="0" width="1.40" height="19.50" fill="#555"/><rect x="59.10" y="0" width="1.10" height="19.50" fill="#111"/><rect x="62.40" y="0" width="1.80" height="19.50" fill="#111"/><rect x="65.20" y="0" width="1.40" height="19.50" fill="#333"/><rect x="67.60" y="0" width="3.00" height="19.50" fill="#555"/><rect x="71.60" y="0" width="1.80" height="19.50" fill="#555"/><rect x="74.70" y="0" width="2.40" height="19.50" fill="#111"/><rect x="79.30" y="0" width="1.10" height="19.50" fill="#111"/><rect x="81.40" y="0" width="1.40" height="19.50" fill="#222"/><rect x="85.00" y="0" width="3.00" height="19.50" fill="#111"/><rect x="89.70" y="0" width="1.10" height="19.50" fill="#222"/><rect x="92.50" y="0" width="0.90" height="19.50" fill="#333"/><rect x="94.70" y="0" width="1.40" height="19.50" fill="#222"/><rect x="97.10" y="0" width="3.00" height="19.50" fill="#555"/><rect x="101.80" y="0" width="1.40" height="19.50" fill="#111"/><rect x="104.50" y="0" width="0.90" height="19.50" fill="#111"/><rect x="107.10" y="0" width="3.00" height="19.50" fill="#222"/><rect x="111.80" y="0" width="1.80" height="19.50" fill="#111"/><rect x="114.40" y="0" width="0.90" height="19.50" fill="#222"/><rect x="117.00" y="0" width="1.80" height="19.50" fill="#555"/></svg>
<svg class="a" style="left:236.00px;top:609.80px;" width="134.80" height="104.20" viewBox="0 0 134.80 104.20"><rect x="0.00" y="0.00" width="134.80" height="104.20" rx="12.00" fill="#1e0a30" stroke="none" stroke-width="0.00" /></svg>
<svg class="a" style="left:236.00px;top:609.80px;" width="134.80" height="104.20" viewBox="0 0 134.80 104.20"><rect x="3" y="3" width="128.8" height="98.2" rx="9" fill="none" stroke="#c8a040" stroke-width="1.6" stroke-dasharray="1.5 11"/></svg>
<svg class="a" style="left:242.00px;top:615.50px;" width="123.90" height="93.50" viewBox="0 0 123.90 93.50"><path d="M8 0 H115.9 Q123.9 0 123.9 8 V36.9 H0 V8 Q0 0 8 0Z" fill="#1f023c"/><path d="M0 36.9 H123.9 V85.5 Q123.9 93.5 115.9 93.5 H8 Q0 93.5 0 85.5Z" fill="#fff"/><rect x="0" y="0" width="123.9" height="93.5" rx="8" fill="none" stroke="#d8b070" stroke-width="1"/></svg>
<div class="t" style="left:265.86px;top:627.00px;font-family:'Liberation Serif', serif;font-size:21.76px;line-height:21.76px;font-weight:400;font-style:normal;color:#fff;transform:scaleX(1.0269);-webkit-text-stroke:0.6px #fff;">Pocklaed</div>
<div class="t" style="left:277.76px;top:659.00px;font-family:'Liberation Sans', sans-serif;font-size:11.19px;line-height:11.19px;font-weight:400;font-style:normal;color:#1e1e1e;transform:scaleX(1.0256);-webkit-text-stroke:0.25px #1e1e1e;">Pegt Text</div>
<svg class="a" style="left:260.80px;top:683.90px;" width="50.80" height="19.50" viewBox="0 0 50.80 19.50"><rect x="0.00" y="0" width="1.80" height="19.50" fill="#111"/><rect x="2.80" y="0" width="1.40" height="19.50" fill="#777"/><rect x="5.90" y="0" width="0.90" height="19.50" fill="#222"/><rect x="7.60" y="0" width="1.40" height="19.50" fill="#555"/><rect x="10.70" y="0" width="0.90" height="19.50" fill="#555"/><rect x="12.40" y="0" width="2.40" height="19.50" fill="#777"/><rect x="15.80" y="0" width="2.40" height="19.50" fill="#555"/><rect x="19.50" y="0" width="1.10" height="19.50" fill="#555"/><rect x="21.90" y="0" width="2.40" height="19.50" fill="#333"/><rect x="26.50" y="0" width="0.90" height="19.50" fill="#777"/><rect x="28.20" y="0" width="2.40" height="19.50" fill="#555"/><rect x="31.90" y="0" width="1.80" height="19.50" fill="#222"/><rect x="34.70" y="0" width="3.00" height="19.50" fill="#111"/><rect x="39.90" y="0" width="1.80" height="19.50" fill="#111"/><rect x="42.50" y="0" width="1.80" height="19.50" fill="#555"/><rect x="45.10" y="0" width="2.40" height="19.50" fill="#777"/><rect x="48.50" y="0" width="2.30" height="19.50" fill="#111"/></svg>
<svg class="a" style="left:315.40px;top:689.20px;" width="35.80" height="14.20" viewBox="0 0 35.80 14.20"><rect x="0.00" y="0" width="3.00" height="14.20" fill="#111"/><rect x="4.00" y="0" width="1.80" height="14.20" fill="#555"/><rect x="8.00" y="0" width="0.90" height="14.20" fill="#111"/><rect x="10.60" y="0" width="0.90" height="14.20" fill="#777"/><rect x="13.70" y="0" width="2.40" height="14.20" fill="#111"/><rect x="17.80" y="0" width="1.10" height="14.20" fill="#777"/><rect x="20.60" y="0" width="3.00" height="14.20" fill="#111"/><rect x="24.40" y="0" width="3.00" height="14.20" fill="#111"/><rect x="28.40" y="0" width="1.10" height="14.20" fill="#111"/><rect x="31.70" y="0" width="1.80" height="14.20" fill="#333"/><rect x="34.80" y="0" width="1.00" height="14.20" fill="#555"/></svg>
<svg class="a" style="left:385.10px;top:611.00px;" width="143.80" height="101.70" viewBox="0 0 143.80 101.70"><rect x="1.30" y="1.30" width="141.20" height="99.10" rx="14.00" fill="#fff" stroke="#111" stroke-width="2.60" stroke-dasharray="6.5 4.2" /></svg>
<div class="t" style="left:425.27px;top:628.00px;font-family:'Liberation Serif', serif;font-size:24.07px;line-height:24.07px;font-weight:400;font-style:normal;color:#111;transform:scaleX(1.0524);">Jastile</div>
<div class="t" style="left:429.39px;top:659.00px;font-family:'Liberation Sans', sans-serif;font-size:11.19px;line-height:11.19px;font-weight:400;font-style:normal;color:#1e1e1e;transform:scaleX(1.0964);-webkit-text-stroke:0.25px #1e1e1e;">Hey Text</div>
<svg class="a" style="left:398.10px;top:686.30px;" width="118.30" height="18.70" viewBox="0 0 118.30 18.70"><rect x="0.00" y="0" width="3.00" height="18.70" fill="#333"/><rect x="4.30" y="0" width="1.40" height="18.70" fill="#111"/><rect x="6.50" y="0" width="0.90" height="18.70" fill="#222"/><rect x="9.60" y="0" width="1.40" height="18.70" fill="#222"/><rect x="12.30" y="0" width="1.80" height="18.70" fill="#111"/><rect x="15.10" y="0" width="1.10" height="18.70" fill="#333"/><rect x="17.00" y="0" width="3.00" height="18.70" fill="#777"/><rect x="22.20" y="0" width="3.00" height="18.70" fill="#111"/><rect x="27.40" y="0" width="1.80" height="18.70" fill="#333"/><rect x="30.00" y="0" width="3.00" height="18.70" fill="#333"/><rect x="34.30" y="0" width="0.90" height="18.70" fill="#777"/><rect x="36.90" y="0" width="1.40" height="18.70" fill="#111"/><rect x="40.50" y="0" width="1.40" height="18.70" fill="#555"/><rect x="42.90" y="0" width="3.00" height="18.70" fill="#555"/><rect x="46.90" y="0" width="0.90" height="18.70" fill="#333"/><rect x="49.10" y="0" width="3.00" height="18.70" fill="#111"/><rect x="54.30" y="0" width="0.90" height="18.70" fill="#111"/><rect x="56.90" y="0" width="3.00" height="18.70" fill="#111"/><rect x="61.20" y="0" width="2.40" height="18.70" fill="#111"/><rect x="64.60" y="0" width="3.00" height="18.70" fill="#111"/><rect x="69.30" y="0" width="1.10" height="18.70" fill="#222"/><rect x="72.60" y="0" width="2.40" height="18.70" fill="#333"/><rect x="75.80" y="0" width="1.40" height="18.70" fill="#333"/><rect x="78.90" y="0" width="1.40" height="18.70" fill="#111"/><rect x="81.60" y="0" width="1.10" height="18.70" fill="#222"/><rect x="83.70" y="0" width="1.80" height="18.70" fill="#222"/><rect x="87.70" y="0" width="0.90" height="18.70" fill="#555"/><rect x="89.60" y="0" width="1.10" height="18.70" fill="#111"/><rect x="92.40" y="0" width="2.40" height="18.70" fill="#111"/><rect x="96.10" y="0" width="1.40" height="18.70" fill="#111"/><rect x="99.20" y="0" width="1.40" height="18.70" fill="#777"/><rect x="101.40" y="0" width="1.40" height="18.70" fill="#222"/><rect x="105.00" y="0" width="3.00" height="18.70" fill="#777"/><rect x="108.80" y="0" width="1.40" height="18.70" fill="#333"/><rect x="111.90" y="0" width="1.40" height="18.70" fill="#555"/><rect x="114.10" y="0" width="2.40" height="18.70" fill="#111"/></svg>
<svg class="a" style="left:565.60px;top:608.70px;" width="240.90" height="107.30" viewBox="0 0 240.90 107.30"><rect x="0.00" y="0.00" width="240.90" height="107.30" rx="15.00" fill="#e2f8f1" stroke="none" stroke-width="0.00" /></svg>
<svg class="a" style="left:568.50px;top:613.20px;" width="236.00" height="100.00" viewBox="0 0 236.00 100.00"><rect x="1.50" y="1.50" width="233.00" height="97.00" rx="12.00" fill="#d4f8ea" stroke="#111" stroke-width="3.00" stroke-dasharray="5 3.6" /></svg>
<div class="t" style="left:616.65px;top:630.00px;font-family:'Liberation Serif', serif;font-size:28.39px;line-height:28.39px;font-weight:400;font-style:normal;color:#111;transform:scaleX(1.0979);">Jable Llaelt</div>
<div class="t" style="left:644.88px;top:662.00px;font-family:'Liberation Sans', sans-serif;font-size:13.52px;line-height:13.52px;font-weight:400;font-style:normal;color:#1e1e1e;transform:scaleX(0.9192);-webkit-text-stroke:0.25px #1e1e1e;">Fey Taye Text</div>
<svg class="a" style="left:728.10px;top:689.40px;" width="63.30" height="15.40" viewBox="0 0 63.30 15.40"><rect x="0.00" y="0" width="0.90" height="15.40" fill="#777"/><rect x="1.90" y="0" width="2.40" height="15.40" fill="#555"/><rect x="5.30" y="0" width="1.10" height="15.40" fill="#111"/><rect x="8.10" y="0" width="1.80" height="15.40" fill="#111"/><rect x="10.90" y="0" width="1.10" height="15.40" fill="#333"/><rect x="13.00" y="0" width="1.10" height="15.40" fill="#555"/><rect x="15.10" y="0" width="1.10" height="15.40" fill="#111"/><rect x="17.90" y="0" width="1.10" height="15.40" fill="#111"/><rect x="19.80" y="0" width="1.80" height="15.40" fill="#222"/><rect x="22.60" y="0" width="1.10" height="15.40" fill="#555"/><rect x="25.90" y="0" width="3.00" height="15.40" fill="#777"/><rect x="30.20" y="0" width="2.40" height="15.40" fill="#111"/><rect x="34.30" y="0" width="1.10" height="15.40" fill="#111"/><rect x="36.20" y="0" width="1.40" height="15.40" fill="#777"/><rect x="38.90" y="0" width="0.90" height="15.40" fill="#555"/><rect x="42.00" y="0" width="1.40" height="15.40" fill="#777"/><rect x="44.20" y="0" width="2.40" height="15.40" fill="#333"/><rect x="47.60" y="0" width="1.10" height="15.40" fill="#222"/><rect x="49.50" y="0" width="0.90" height="15.40" fill="#333"/><rect x="52.10" y="0" width="1.40" height="15.40" fill="#111"/><rect x="55.20" y="0" width="1.40" height="15.40" fill="#333"/><rect x="58.80" y="0" width="3.00" height="15.40" fill="#777"/></svg>
<svg class="a" style="left:840.00px;top:609.00px;" width="249.00" height="106.50" viewBox="0 0 249.00 106.50"><rect x="0.00" y="0.00" width="249.00" height="106.50" rx="16.00" fill="#fff58a" stroke="none" stroke-width="0.00" /></svg>
<div class="a" style="left:963.00px;top:616.00px;width:1.00px;height:92.00px;background:#f6f0c0"></div>
<svg class="a" style="left:841.60px;top:611.00px;" width="246.40" height="103.00" viewBox="0 0 246.40 103.00"><rect x="2.10" y="2.10" width="242.20" height="98.80" rx="14.00" fill="none" stroke="#111" stroke-width="4.20" stroke-dasharray="6.5 4" /></svg>
<div class="t" style="left:866.66px;top:629.00px;font-family:'Liberation Serif', serif;font-size:23.78px;line-height:23.78px;font-weight:400;font-style:normal;color:#111;transform:scaleX(1.0256);">Tackled</div>
<div class="t" style="left:979.48px;top:629.00px;font-family:'Liberation Serif', serif;font-size:23.78px;line-height:23.78px;font-weight:400;font-style:normal;color:#111;transform:scaleX(1.0502);">Lockled</div>
<div class="t" style="left:879.20px;top:659.00px;font-family:'Liberation Sans', sans-serif;font-size:12.35px;line-height:12.35px;font-weight:400;font-style:normal;color:#1e1e1e;transform:scaleX(0.9828);-webkit-text-stroke:0.25px #1e1e1e;">Pext Text</div>
<div class="t" style="left:996.70px;top:659.00px;font-family:'Liberation Sans', sans-serif;font-size:12.35px;line-height:12.35px;font-weight:400;font-style:normal;color:#1e1e1e;transform:scaleX(0.9828);-webkit-text-stroke:0.25px #1e1e1e;">Peyt Text</div>
<svg class="a" style="left:856.10px;top:683.90px;" width="44.60" height="19.50" viewBox="0 0 44.60 19.50"><rect x="0.00" y="0" width="2.40" height="19.50" fill="#111"/><rect x="3.70" y="0" width="2.40" height="19.50" fill="#555"/><rect x="7.40" y="0" width="0.90" height="19.50" fill="#555"/><rect x="9.60" y="0" width="1.80" height="19.50" fill="#333"/><rect x="12.20" y="0" width="0.90" height="19.50" fill="#111"/><rect x="14.80" y="0" width="3.00" height="19.50" fill="#111"/><rect x="19.10" y="0" width="0.90" height="19.50" fill="#333"/><rect x="21.30" y="0" width="2.40" height="19.50" fill="#555"/><rect x="25.40" y="0" width="3.00" height="19.50" fill="#111"/><rect x="30.10" y="0" width="1.10" height="19.50" fill="#111"/><rect x="32.90" y="0" width="1.80" height="19.50" fill="#777"/><rect x="36.90" y="0" width="2.40" height="19.50" fill="#111"/><rect x="41.50" y="0" width="3.00" height="19.50" fill="#333"/></svg>
<div class="t" style="left:918.24px;top:688.00px;font-family:'Liberation Sans', sans-serif;font-size:15.73px;line-height:15.73px;font-weight:700;font-style:normal;color:#111;transform:scaleX(0.9124);">Toctil</div>
<div class="t" style="left:975.32px;top:687.00px;font-family:'Liberation Sans', sans-serif;font-size:16.33px;line-height:16.33px;font-weight:700;font-style:normal;color:#111;transform:scaleX(0.8539);">18851</div>
<div class="t" style="left:1032.75px;top:687.00px;font-family:'Liberation Sans', sans-serif;font-size:16.33px;line-height:16.33px;font-weight:700;font-style:normal;color:#111;transform:scaleX(0.8999);">54400</div>
<svg class="a" style="left:1115.50px;top:611.00px;" width="151.50" height="101.40" viewBox="0 0 151.50 101.40"><rect x="1.50" y="1.50" width="148.50" height="98.40" rx="14.00" fill="#fff" stroke="#1e6b50" stroke-width="3.00" stroke-dasharray="7 5" /></svg>
<div class="t" style="left:1154.55px;top:625.00px;font-family:'Liberation Serif', serif;font-size:27.53px;line-height:27.53px;font-weight:400;font-style:normal;color:#111;transform:scaleX(1.0717);">Leked</div>
<div class="t" style="left:1164.09px;top:658.00px;font-family:'Liberation Sans', sans-serif;font-size:11.77px;line-height:11.77px;font-weight:400;font-style:normal;color:#1e1e1e;transform:scaleX(1.0455);-webkit-text-stroke:0.25px #1e1e1e;">Fey Textt</div>
<div class="t" style="left:1134.69px;top:682.00px;font-family:'Liberation Sans', sans-serif;font-size:14.24px;line-height:14.24px;font-weight:400;font-style:normal;color:#111;transform:scaleX(0.9621);">Toston</div>
<svg class="a" style="left:1208.80px;top:686.30px;" width="42.70" height="14.70" viewBox="0 0 42.70 14.70"><rect x="0.00" y="0" width="2.40" height="14.70" fill="#222"/><rect x="4.60" y="0" width="0.90" height="14.70" fill="#555"/><rect x="6.50" y="0" width="1.40" height="14.70" fill="#111"/><rect x="9.60" y="0" width="1.80" height="14.70" fill="#777"/><rect x="12.40" y="0" width="0.90" height="14.70" fill="#333"/><rect x="14.10" y="0" width="2.40" height="14.70" fill="#111"/><rect x="17.30" y="0" width="0.90" height="14.70" fill="#111"/><rect x="20.40" y="0" width="2.40" height="14.70" fill="#333"/><rect x="24.10" y="0" width="2.40" height="14.70" fill="#111"/><rect x="28.20" y="0" width="0.90" height="14.70" fill="#111"/><rect x="31.30" y="0" width="3.00" height="14.70" fill="#222"/><rect x="36.00" y="0" width="2.40" height="14.70" fill="#111"/><rect x="39.70" y="0" width="3.00" height="14.70" fill="#555"/></svg>
</body></html>
